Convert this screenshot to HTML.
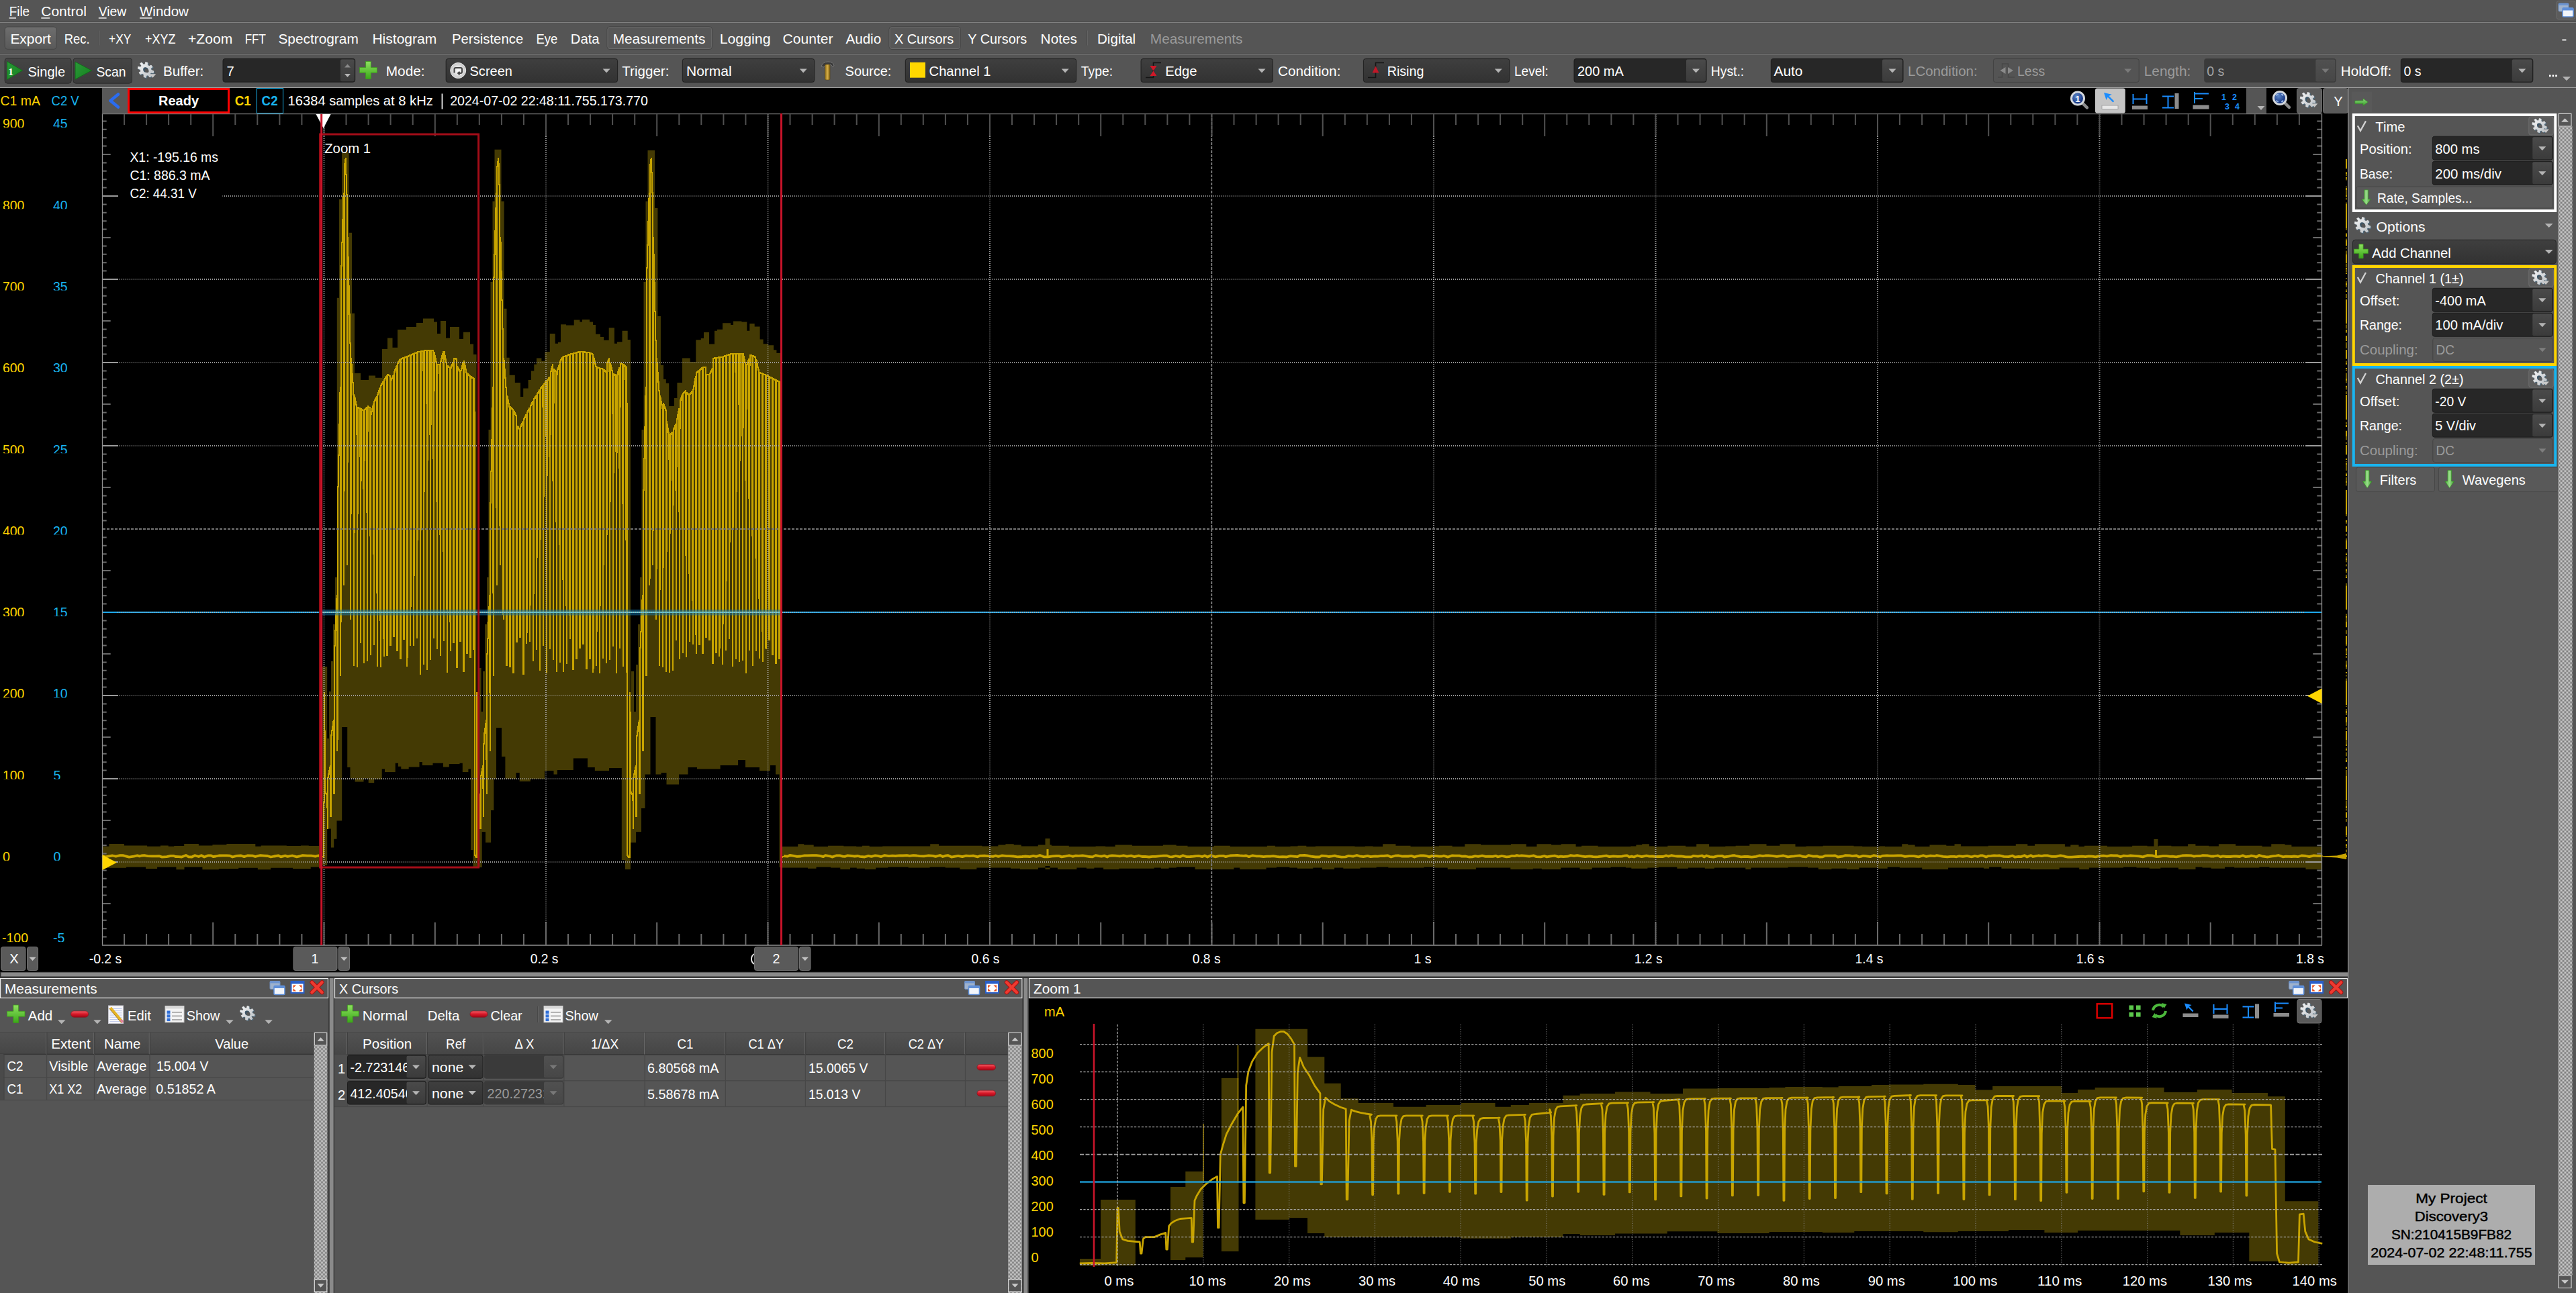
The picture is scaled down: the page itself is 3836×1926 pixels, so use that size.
<!DOCTYPE html>
<html><head><meta charset="utf-8"><title>WaveForms Scope</title>
<style>html,body{margin:0;padding:0;background:#555;}svg{display:block}text{font-family:"Liberation Sans",sans-serif;white-space:pre}</style>
</head><body>
<svg width="3836" height="1926" viewBox="0 0 3836 1926" fill="none">
<defs>
<linearGradient id="gg" x1="0" y1="0" x2="1" y2="1"><stop offset="0" stop-color="#fbfbfb"/><stop offset="1" stop-color="#b4b9be"/></linearGradient>
<linearGradient id="pg" x1="0" y1="0" x2="0" y2="1"><stop offset="0" stop-color="#8ee060"/><stop offset="1" stop-color="#3aa818"/></linearGradient>
<linearGradient id="mg" x1="0" y1="0" x2="0" y2="1"><stop offset="0" stop-color="#f06068"/><stop offset="0.5" stop-color="#d81828"/><stop offset="1" stop-color="#a00818"/></linearGradient>
<linearGradient id="ag" x1="0" y1="0" x2="1" y2="0"><stop offset="0" stop-color="#4ab43a"/><stop offset="0.5" stop-color="#9adc8a"/><stop offset="1" stop-color="#3aa02c"/></linearGradient>
<linearGradient id="ag2" x1="0" y1="0" x2="0" y2="1"><stop offset="0" stop-color="#8ad87a"/><stop offset="1" stop-color="#3aa02c"/></linearGradient>
<linearGradient id="cba" x1="0" y1="0" x2="0" y2="1"><stop offset="0" stop-color="#4a4a4a"/><stop offset="1" stop-color="#3b3b3b"/></linearGradient>
<linearGradient id="cbd" x1="0" y1="0" x2="0" y2="1"><stop offset="0" stop-color="#505050"/><stop offset="1" stop-color="#474747"/></linearGradient>
<linearGradient id="cbl" x1="0" y1="0" x2="0" y2="1"><stop offset="0" stop-color="#3f3f3f"/><stop offset="1" stop-color="#323232"/></linearGradient>
<linearGradient id="btn" x1="0" y1="0" x2="0" y2="1"><stop offset="0" stop-color="#454545"/><stop offset="1" stop-color="#3b3b3b"/></linearGradient>
<linearGradient id="exp" x1="0" y1="0" x2="0" y2="1"><stop offset="0" stop-color="#6e6e6e"/><stop offset="1" stop-color="#595959"/></linearGradient>
<linearGradient id="play" x1="0" y1="0" x2="1" y2="1"><stop offset="0" stop-color="#2a9a38"/><stop offset="1" stop-color="#15801f"/></linearGradient>
<linearGradient id="ham" x1="0" y1="0" x2="1" y2="0"><stop offset="0" stop-color="#8a6a18"/><stop offset="0.5" stop-color="#d8b048"/><stop offset="1" stop-color="#7a5c14"/></linearGradient>
<linearGradient id="hdr" x1="0" y1="0" x2="0" y2="1"><stop offset="0" stop-color="#525252"/><stop offset="1" stop-color="#464646"/></linearGradient>
<radialGradient id="scr"><stop offset="0" stop-color="#ffffff"/><stop offset="1" stop-color="#c8c8c8"/></radialGradient>
<radialGradient id="mgf" cx="0.4" cy="0.35"><stop offset="0" stop-color="#5a86c8"/><stop offset="1" stop-color="#1c3c88"/></radialGradient>
<pattern id="chk" width="2" height="2" patternUnits="userSpaceOnUse"><rect width="2" height="2" fill="#767676"/><rect width="1" height="1" fill="#d0d0d0"/><rect x="1" y="1" width="1" height="1" fill="#d0d0d0"/></pattern>
</defs>
<rect x="0" y="131" width="3497" height="1317.5" fill="#000"/>
<rect x="152" y="131" width="38" height="38.5" fill="#585858"/>
<path d="M176 140.5L164.5 150 176 159.5" fill="none" stroke="#2a6cf0" stroke-width="4.6" stroke-linecap="round" stroke-linejoin="round"/>
<rect x="191.5" y="132.5" width="149" height="35" fill="#000" stroke="#ff0000" stroke-width="3"/>
<text x="236" y="157" font-size="20.2" fill="#fff" font-weight="700" textLength="60" lengthAdjust="spacingAndGlyphs">Ready</text>
<text x="0.5" y="157" font-size="20.2" fill="#ffd500" textLength="59.4" lengthAdjust="spacingAndGlyphs">C1 mA</text>
<text x="76.5" y="157" font-size="20.2" fill="#19b5f0" textLength="41.2" lengthAdjust="spacingAndGlyphs">C2 V</text>
<text x="349.8" y="157" font-size="20.2" fill="#ffd500" font-weight="700" textLength="24" lengthAdjust="spacingAndGlyphs">C1</text>
<rect x="382.5" y="131.5" width="39" height="37" fill="#000" stroke="#19b5f0" stroke-width="1"/>
<text x="389.6" y="157" font-size="20.2" fill="#19b5f0" font-weight="700" textLength="24" lengthAdjust="spacingAndGlyphs">C2</text>
<text x="428.6" y="157" font-size="20.2" fill="#fff" textLength="216.2" lengthAdjust="spacingAndGlyphs">16384 samples at 8 kHz</text>
<rect x="657.6" y="139.5" width="1.6" height="23" fill="#fff"/>
<text x="670.2" y="157" font-size="20.2" fill="#fff" textLength="294.6" lengthAdjust="spacingAndGlyphs">2024-07-02 22:48:11.755.173.770</text>
<path d="M3099.9 152.4l8 8" stroke="#8c8c8c" stroke-width="4.5" stroke-linecap="round"/>
<circle cx="3094" cy="146.5" r="9.5" fill="url(#mgf)" stroke="#d4d8dc" stroke-width="3"/>
<text x="3090.3" y="152" font-size="13.4" fill="#fff" font-weight="700">1</text>
<rect x="3120" y="131.5" width="44.8" height="37" fill="#c4c4c4" rx="3"/>
<path d="M3133 138l3.5 11 2.2-4.2 7.8 7.8 1.8-1.8-7.8-7.8 4.2-2.2z" fill="#1a8cff"/>
<rect x="3130" y="157" width="24" height="5.5" fill="#e8e8e8" stroke="#9a9a9a" stroke-width="0.8"/>
<path d="M3176.5 140v15M3196.5 140v15M3176.5 147.5h20" fill="none" stroke="#1a8cff" stroke-width="2"/>
<rect x="3175" y="157.5" width="23" height="5.5" fill="#8c8c8c"/>
<path d="M3220 143.5h17M3220 160.5h17M3228.5 143.5v17" fill="none" stroke="#1a8cff" stroke-width="2"/>
<rect x="3238.5" y="139" width="6" height="23" fill="#8c8c8c"/>
<path d="M3268 137v17M3268 139.5h21M3268 147h12" fill="none" stroke="#1a8cff" stroke-width="2"/>
<rect x="3265.5" y="156.5" width="24" height="6" fill="#8c8c8c"/>
<text x="3308" y="149" font-size="12.5" fill="#1a8cff" font-weight="700">1</text>
<text x="3324" y="149" font-size="12.5" fill="#1a8cff" font-weight="700">2</text>
<text x="3313" y="163" font-size="12.5" fill="#1a8cff" font-weight="700">3</text>
<text x="3328" y="163" font-size="12.5" fill="#1a8cff" font-weight="700">4</text>
<rect x="3345" y="131" width="30" height="38.5" fill="#555"/>
<path d="M3361.5 158h11l-5.5 6z" fill="#b4b4b4"/>
<path d="M3400.9 151.9l8 8" stroke="#8c8c8c" stroke-width="4.5" stroke-linecap="round"/>
<circle cx="3395" cy="146" r="9.5" fill="url(#mgf)" stroke="#d4d8dc" stroke-width="3"/>
<path d="M3390.5 143v-2.5h2.5M3397 140.5h2.5v2.5M3399.5 149v2.5h-2.5M3393 151.5h-2.5v-2.5" fill="none" stroke="#9ab8e8" stroke-width="1.3"/>
<rect x="3420.5" y="131.5" width="37" height="37" fill="#5a5a5a" stroke="#6e6e6e" stroke-width="1" rx="3"/>
<g transform="translate(3436.5 148.5) rotate(-45) scale(0.84 1) rotate(45)"><path d="M8.5 -0.3L12.1 0.7L11.4 4L7.7 3.5L6.2 5.8L8 9.1L5.2 10.9L2.9 7.9L0.3 8.5L-0.7 12.1L-4 11.4L-3.5 7.7L-5.8 6.2L-9.1 8L-10.9 5.2L-7.9 2.9L-8.5 0.3L-12.1 -0.7L-11.4 -4L-7.7 -3.5L-6.2 -5.8L-8 -9.1L-5.2 -10.9L-2.9 -7.9L-0.3 -8.5L0.7 -12.1L4 -11.4L3.5 -7.7L5.8 -6.2L9.1 -8L10.9 -5.2L7.9 -2.9z" transform="translate(1.3 1.1)" fill="#4f6676" stroke="#4f6676" stroke-width="1" stroke-linejoin="round"/><path d="M8.5 -0.3L12.1 0.7L11.4 4L7.7 3.5L6.2 5.8L8 9.1L5.2 10.9L2.9 7.9L0.3 8.5L-0.7 12.1L-4 11.4L-3.5 7.7L-5.8 6.2L-9.1 8L-10.9 5.2L-7.9 2.9L-8.5 0.3L-12.1 -0.7L-11.4 -4L-7.7 -3.5L-6.2 -5.8L-8 -9.1L-5.2 -10.9L-2.9 -7.9L-0.3 -8.5L0.7 -12.1L4 -11.4L3.5 -7.7L5.8 -6.2L9.1 -8L10.9 -5.2L7.9 -2.9zM-4 0a4 4 0 1 0 7.9 0a4 4 0 1 0 -7.9 0z" fill="url(#gg)" fill-rule="evenodd" stroke="#dfe3e6" stroke-width="0.8" stroke-linejoin="round"/><path d="M-4 0a4 4 0 1 0 7.9 0a4 4 0 1 0 -7.9 0z" fill="#3d5566"/><path d="M-4 0a4 4 0 1 0 7.9 0a4 4 0 1 0 -7.9 0z" transform="translate(1.5 1.2) scale(0.8)" fill="#5a5a5a"/></g>
<path d="M3441.9 154.3h9.5l-4.8 5.5z" fill="#c8c8c8"/>
<rect x="3459.5" y="131.5" width="36.8" height="37" fill="#5a5a5a" stroke="#6e6e6e" stroke-width="1" rx="3"/>
<text x="3475.2" y="157.5" font-size="20.2" fill="#fff">Y</text>
<path d="M152 1260.7L162.4 1260.7L162.4 1257L184.9 1257L184.9 1259.5L197.5 1259.5L197.5 1259.5L219.1 1259.5L219.1 1260.7L238.9 1260.7L238.9 1259.5L250.7 1259.5L250.7 1260.7L259.2 1260.7L259.2 1260.1L274.2 1260.1L274.2 1257L295.9 1257L295.9 1259.5L316.4 1259.5L316.4 1258.3L337.4 1258.3L337.4 1257L356.1 1257L356.1 1257L380.3 1257L380.3 1260.7L388.7 1260.7L388.7 1259.5L406.4 1259.5L406.4 1259.5L426.8 1259.5L426.8 1260.1L447.9 1260.1L447.9 1259.5L459.8 1259.5L459.8 1260.1L480 1260.1L480 1295.2L479.3 1295.2L479.3 1291.6L462.7 1291.6L462.7 1294L436.1 1294L436.1 1292.8L415.1 1292.8L415.1 1292.8L403 1292.8L403 1295.2L383.8 1295.2L383.8 1292.8L355.2 1292.8L355.2 1294L325.8 1294L325.8 1295.2L301.4 1295.2L301.4 1291.6L274.5 1291.6L274.5 1295.2L262.4 1295.2L262.4 1291.6L234.1 1291.6L234.1 1294L217 1294L217 1291.6L188 1291.6L188 1292.8L165.1 1292.8L165.1 1292.8L152 1292.8zM1163 1261L1188.2 1261L1188.2 1257.3L1197.2 1257.3L1197.2 1258.6L1211.7 1258.6L1211.7 1261L1233 1261L1233 1259.8L1256.3 1259.8L1256.3 1260.4L1275.2 1260.4L1275.2 1261L1283.9 1261L1283.9 1259.8L1294.7 1259.8L1294.7 1261L1314.2 1261L1314.2 1260.4L1335.2 1260.4L1335.2 1260.4L1360.3 1260.4L1360.3 1260.4L1385.2 1260.4L1385.2 1257.3L1398 1257.3L1398 1259.8L1421.7 1259.8L1421.7 1259.8L1438.1 1259.8L1438.1 1259.8L1462.4 1259.8L1462.4 1260.4L1486.4 1260.4L1486.4 1258.6L1497.4 1258.6L1497.4 1257.3L1509.7 1257.3L1509.7 1258.6L1520.8 1258.6L1520.8 1260.4L1531.3 1260.4L1531.3 1260.4L1545.8 1260.4L1545.8 1258.6L1565.9 1258.6L1565.9 1259.8L1591.8 1259.8L1591.8 1261L1614.2 1261L1614.2 1261L1631.6 1261L1631.6 1260.4L1646.2 1260.4L1646.2 1261L1660.6 1261L1660.6 1258.6L1685.9 1258.6L1685.9 1259.8L1711.1 1259.8L1711.1 1259.8L1731.9 1259.8L1731.9 1258.6L1751.7 1258.6L1751.7 1259.8L1768.5 1259.8L1768.5 1261L1785.6 1261L1785.6 1261L1807.9 1261L1807.9 1259.8L1831.8 1259.8L1831.8 1261L1846.1 1261L1846.1 1261L1870.7 1261L1870.7 1261L1886.9 1261L1886.9 1259.8L1898.9 1259.8L1898.9 1261L1921.5 1261L1921.5 1260.4L1932.5 1260.4L1932.5 1259.8L1945.3 1259.8L1945.3 1261L1958.9 1261L1958.9 1260.4L1979.6 1260.4L1979.6 1260.4L1997.7 1260.4L1997.7 1260.4L2017.5 1260.4L2017.5 1261L2032.8 1261L2032.8 1260.4L2044.5 1260.4L2044.5 1261L2059.1 1261L2059.1 1257.3L2078.4 1257.3L2078.4 1259.8L2100.5 1259.8L2100.5 1261L2121.5 1261L2121.5 1261L2133 1261L2133 1260.4L2142.9 1260.4L2142.9 1259.8L2162.6 1259.8L2162.6 1261L2181.3 1261L2181.3 1257.3L2205.1 1257.3L2205.1 1258.6L2226.6 1258.6L2226.6 1258.6L2250 1258.6L2250 1257.3L2272.8 1257.3L2272.8 1261L2288.5 1261L2288.5 1257.3L2310.1 1257.3L2310.1 1258.6L2324.7 1258.6L2324.7 1257.3L2337.1 1257.3L2337.1 1257.3L2346.6 1257.3L2346.6 1261L2355.1 1261L2355.1 1259.8L2379.6 1259.8L2379.6 1261L2392.2 1261L2392.2 1261L2417.1 1261L2417.1 1261L2428.4 1261L2428.4 1260.4L2436.4 1260.4L2436.4 1258.6L2445.2 1258.6L2445.2 1257.3L2455.9 1257.3L2455.9 1260.4L2464 1260.4L2464 1261L2483.3 1261L2483.3 1259.8L2493.3 1259.8L2493.3 1259.8L2510.1 1259.8L2510.1 1261L2526.2 1261L2526.2 1257.3L2545.1 1257.3L2545.1 1261L2569.3 1261L2569.3 1260.4L2584.6 1260.4L2584.6 1259.8L2605.3 1259.8L2605.3 1257.3L2630.5 1257.3L2630.5 1259.8L2650.4 1259.8L2650.4 1257.3L2673.5 1257.3L2673.5 1261L2689.6 1261L2689.6 1260.4L2714.6 1260.4L2714.6 1259.8L2733.2 1259.8L2733.2 1259.8L2749.9 1259.8L2749.9 1259.8L2760.5 1259.8L2760.5 1260.4L2773.2 1260.4L2773.2 1261L2798.7 1261L2798.7 1260.4L2807 1260.4L2807 1261L2832.2 1261L2832.2 1257.3L2841.3 1257.3L2841.3 1258.6L2851.6 1258.6L2851.6 1261L2861.4 1261L2861.4 1261L2873.5 1261L2873.5 1258.6L2898.3 1258.6L2898.3 1259.8L2910.5 1259.8L2910.5 1257.3L2919.9 1257.3L2919.9 1260.4L2938.5 1260.4L2938.5 1260.4L2960.7 1260.4L2960.7 1259.8L2981.5 1259.8L2981.5 1259.8L3001.8 1259.8L3001.8 1257.3L3019.3 1257.3L3019.3 1259.8L3030 1259.8L3030 1257.3L3045.4 1257.3L3045.4 1257.3L3062.6 1257.3L3062.6 1257.3L3074.9 1257.3L3074.9 1261L3083.3 1261L3083.3 1258.6L3095.5 1258.6L3095.5 1261L3103.9 1261L3103.9 1259.8L3120.3 1259.8L3120.3 1259.8L3137.9 1259.8L3137.9 1261L3149.7 1261L3149.7 1261L3175.1 1261L3175.1 1259.8L3197.6 1259.8L3197.6 1260.4L3214.8 1260.4L3214.8 1259.8L3233.4 1259.8L3233.4 1260.4L3258.1 1260.4L3258.1 1257.3L3269.4 1257.3L3269.4 1259.8L3289.3 1259.8L3289.3 1260.4L3303.9 1260.4L3303.9 1257.3L3329.2 1257.3L3329.2 1259.8L3348.2 1259.8L3348.2 1259.8L3368.6 1259.8L3368.6 1261L3382.2 1261L3382.2 1257.3L3402.5 1257.3L3402.5 1258.6L3412.4 1258.6L3412.4 1261L3435.5 1261L3435.5 1261L3457 1261L3457 1295L3433.5 1295L3433.5 1292.6L3406.4 1292.6L3406.4 1292.6L3394.7 1292.6L3394.7 1292.6L3379.4 1292.6L3379.4 1291.4L3364.4 1291.4L3364.4 1292.6L3337.5 1292.6L3337.5 1292.6L3327.1 1292.6L3327.1 1291.4L3313 1291.4L3313 1293.8L3292.6 1293.8L3292.6 1292.6L3279.5 1292.6L3279.5 1291.4L3269.5 1291.4L3269.5 1295L3244 1295L3244 1292.6L3217.3 1292.6L3217.3 1293.8L3200.7 1293.8L3200.7 1292.6L3181.5 1292.6L3181.5 1291.4L3162.1 1291.4L3162.1 1292.6L3139.7 1292.6L3139.7 1292.6L3110.9 1292.6L3110.9 1295L3096.2 1295L3096.2 1292.6L3086.5 1292.6L3086.5 1292.6L3066.7 1292.6L3066.7 1295L3055.7 1295L3055.7 1295L3040.9 1295L3040.9 1295L3023.2 1295L3023.2 1293.8L2996.5 1293.8L2996.5 1293.8L2980.4 1293.8L2980.4 1291.4L2962.1 1291.4L2962.1 1293.8L2953.9 1293.8L2953.9 1292.6L2931.1 1292.6L2931.1 1292.6L2912.1 1292.6L2912.1 1292.6L2901.1 1292.6L2901.1 1295L2875.8 1295L2875.8 1295L2862.2 1295L2862.2 1292.6L2850.3 1292.6L2850.3 1292.6L2828.8 1292.6L2828.8 1291.4L2810.7 1291.4L2810.7 1293.8L2796.8 1293.8L2796.8 1292.6L2768.5 1292.6L2768.5 1295L2749.9 1295L2749.9 1293.8L2727.4 1293.8L2727.4 1295L2707.7 1295L2707.7 1292.6L2692 1292.6L2692 1291.4L2662.6 1291.4L2662.6 1292.6L2644.3 1292.6L2644.3 1292.6L2625 1292.6L2625 1292.6L2607.4 1292.6L2607.4 1295L2599.3 1295L2599.3 1292.6L2573.6 1292.6L2573.6 1292.6L2552.8 1292.6L2552.8 1293.8L2538.8 1293.8L2538.8 1292.6L2513.9 1292.6L2513.9 1293.8L2497.3 1293.8L2497.3 1291.4L2469.8 1291.4L2469.8 1292.6L2453.4 1292.6L2453.4 1293.8L2429.3 1293.8L2429.3 1292.6L2420.9 1292.6L2420.9 1291.4L2398.6 1291.4L2398.6 1292.6L2370.7 1292.6L2370.7 1295L2352.5 1295L2352.5 1292.6L2324.3 1292.6L2324.3 1295L2307.9 1295L2307.9 1295L2295.8 1295L2295.8 1293.8L2282.8 1293.8L2282.8 1295L2273 1295L2273 1295L2249.3 1295L2249.3 1292.6L2220.2 1292.6L2220.2 1292.6L2197.9 1292.6L2197.9 1295L2169.3 1295L2169.3 1295L2155.7 1295L2155.7 1292.6L2137.1 1292.6L2137.1 1291.4L2120.5 1291.4L2120.5 1292.6L2093.1 1292.6L2093.1 1292.6L2067.3 1292.6L2067.3 1291.4L2049.6 1291.4L2049.6 1292.6L2025.5 1292.6L2025.5 1293.8L2000.3 1293.8L2000.3 1292.6L1987.1 1292.6L1987.1 1295L1969 1295L1969 1292.6L1955.3 1292.6L1955.3 1293.8L1941.9 1293.8L1941.9 1293.8L1931.8 1293.8L1931.8 1292.6L1920.3 1292.6L1920.3 1291.4L1900.8 1291.4L1900.8 1292.6L1885.6 1292.6L1885.6 1295L1862.8 1295L1862.8 1295L1846.2 1295L1846.2 1292.6L1837.4 1292.6L1837.4 1295L1807.6 1295L1807.6 1295L1779.6 1295L1779.6 1291.4L1751.8 1291.4L1751.8 1292.6L1740.6 1292.6L1740.6 1293.8L1728.7 1293.8L1728.7 1292.6L1718.6 1292.6L1718.6 1293.8L1694.6 1293.8L1694.6 1293.8L1666.4 1293.8L1666.4 1295L1643.1 1295L1643.1 1292.6L1629.4 1292.6L1629.4 1293.8L1617.9 1293.8L1617.9 1292.6L1603.4 1292.6L1603.4 1295L1574.9 1295L1574.9 1292.6L1545.9 1292.6L1545.9 1295L1518.9 1295L1518.9 1293.8L1504.9 1293.8L1504.9 1292.6L1493.8 1292.6L1493.8 1292.6L1478 1292.6L1478 1292.6L1454.4 1292.6L1454.4 1295L1429.3 1295L1429.3 1292.6L1407.7 1292.6L1407.7 1291.4L1384.5 1291.4L1384.5 1292.6L1362.4 1292.6L1362.4 1292.6L1352.6 1292.6L1352.6 1291.4L1339 1291.4L1339 1291.4L1322.3 1291.4L1322.3 1292.6L1304.1 1292.6L1304.1 1295L1287.9 1295L1287.9 1293.8L1275.7 1293.8L1275.7 1292.6L1266 1292.6L1266 1295L1251.3 1295L1251.3 1292.6L1237 1292.6L1237 1291.4L1215.5 1291.4L1215.5 1293.8L1203 1293.8L1203 1292.6L1180.9 1292.6L1180.9 1292.6L1163 1292.6zM1556.5 1262V1249h7v13zM3207.5 1262V1250h6v12zM1556.5 1290v5h7v-5zM480 993L487.2 993L487.2 1100L490 1100L490 1030L493 1030L493 985L496 985L496 930L499 930L499 860L501.8 860L501.8 443.7L505 443.7L505 297L509 297L509 226.8L519.6 226.8L519.6 346.7L524 346.7L524 466.7L528 466.7L528 556L537 556L537 566L549 566L549 559.6L559 559.6L559 562.7L569 562.7L569 520L577 520L577 503.5L584.5 503.5L584.5 517.7L592 517.7L592 491L605 491L605 487L620 487L620 481L630 481L630 474.4L646 474.4L646 479.5L651 479.5L651 497L656 497L656 478L664 478L664 503.5L670 503.5L670 487L684 487L684 505L690 505L690 494.8L700 494.8L700 512.6L705 512.6L705 528L709.5 528L709.5 1292L704.5 1292L704.5 1266L701 1266L701 1145.4L697.4 1145.4L697.4 1150L688.8 1150L688.8 1136.8L684.5 1136.8L684.5 1138L668.8 1138L668.8 1142.5L660 1142.5L660 1136.8L644.5 1136.8L644.5 1140L628.8 1140L628.8 1135L624.5 1135L624.5 1142.5L608.7 1142.5L608.7 1145.4L597.3 1145.4L597.3 1141.7L593 1141.7L593 1136.8L588.7 1136.8L588.7 1150L573 1150L573 1145.4L568.7 1145.4L568.7 1161L557.2 1161L557.2 1166L548.7 1166L548.7 1159.7L541.5 1159.7L541.5 1164.5L528.6 1164.5L528.6 1159.7L521.5 1159.7L521.5 1143L517.2 1143L517.2 1083L509.2 1083L509.2 1222.6L501.5 1222.6L501.5 1249.8L497.2 1249.8L497.2 1262.6L492.9 1262.6L492.9 1234.6L487.2 1234.6L487.2 1289L480 1289zM712.5 995L716.6 995L716.6 1060L719 1060L719 1000L722 1000L722 930L725 930L725 860L727.5 860L727.5 640L730.5 640L730.5 420L733.5 420L733.5 300L736.5 300L736.5 222.8L746.5 222.8L746.5 300L750.7 300L750.7 459.8L754.5 459.8L754.5 532.8L758.7 532.8L758.7 558.8L766.8 558.8L766.8 570L775 570L775 591L779.2 591L779.2 578.6L786.6 578.6L786.6 566L791 566L791 552.6L795.3 552.6L795.3 542.7L799 542.7L799 533.6L806.4 533.6L806.4 537.8L811.4 537.8L811.4 524L818.8 524L818.8 497L826.7 497L826.7 511.8L831 511.8L831 509.8L835 509.8L835 483.3L843 483.3L843 484.6L854.7 484.6L854.7 476.4L863.4 476.4L863.4 479.6L867 479.6L867 475.9L878 475.9L878 479.6L883 479.6L883 484L887 484L887 497.7L894 497.7L894 501.9L899 501.9L899 506.8L906.7 506.8L906.7 488.3L914.9 488.3L914.9 511.8L919 511.8L919 509.3L926.5 509.3L926.5 492.7L934.7 492.7L934.7 506L938.9 506L938.9 1295L931 1295L931 1281L925.8 1281L925.8 1144L907 1144L907 1148L885.8 1148L885.8 1142.9L875 1142.9L875 1129.5L853.8 1129.5L853.8 1147L829.8 1147L829.8 1153.5L824.5 1153.5L824.5 1148L811 1148L811 1160L789.8 1160L789.8 1164L773.7 1164L773.7 1151L768.4 1151L768.4 1160L752.4 1160L752.4 1127L747 1127L747 1084L739 1084L739 1160L735.3 1160L735.3 1207L731 1207L731 1255L723 1255L723 1239L717.7 1239L717.7 1292L709.5 1292zM940 1000L944 1000L944 1060L947 1060L947 990L950 990L950 930L953 930L953 860L955.5 860L955.5 640L958.5 640L958.5 420L961.5 420L961.5 300L964.5 300L964.5 224L975 224L975 310L979.4 310L979.4 471L983.9 471L983.9 544L988 544L988 565L991.8 565L991.8 571L996.2 571L996.2 605L1004 605L1004 593L1008.4 593L1008.4 570L1016 570L1016 533.6L1027.7 533.6L1027.7 539L1036.3 539L1036.3 506.3L1043.8 506.3L1043.8 503.9L1048 503.9L1048 495L1056 495L1056 512.5L1064 512.5L1064 492.7L1068 492.7L1068 490.7L1076 490.7L1076 481.3L1088 481.3L1088 484L1092 484L1092 478.4L1104.4 478.4L1104.4 479.6L1112.3 479.6L1112.3 492.7L1116.3 492.7L1116.3 482L1123.7 482L1123.7 486.5L1131.6 486.5L1131.6 505.6L1136.6 505.6L1136.6 512.3L1144 512.3L1144 514.3L1152 514.3L1152 521.2L1156.4 521.2L1156.4 525.9L1163 525.9L1163 1292L1160.6 1292L1160.6 1153.5L1155 1153.5L1155 1140L1147 1140L1147 1148L1131 1148L1131 1143L1110 1143L1110 1132L1099 1132L1099 1140L1072.6 1140L1072.6 1145.5L1038 1145.5L1038 1143L1024.5 1143L1024.5 1153.5L1011 1153.5L1011 1168.5L992.5 1168.5L992.5 1151L984.5 1151L984.5 1153.5L976.5 1153.5L976.5 1068L968.5 1068L968.5 1153.5L960.5 1153.5L960.5 1204L955 1204L955 1239L947 1239L947 1255L938.9 1255z" fill="#443a04"/>
<path d="M477.5 1275V1277M478.5 1275V1277M479.5 1275V1277M480.5 1275V1277M481.5 1194V1278M482.5 1031V1278M483.5 1031V1196M484.5 1088V1183M485.5 1179V1184M486.5 1181V1204M487.5 1157V1235M488.5 1152V1235M489.5 1147V1159M490.5 1142V1154M491.5 1140V1217M492.5 1094V1217M493.5 1087V1217M494.5 1081V1096M495.5 1074V1089M496.5 1072V1183M497.5 961V1183M498.5 938V1183M499.5 914V963M500.5 891V940M501.5 886V1119M502.5 724V1119M503.5 677V1102M504.5 631V726M505.5 584V679M506.5 576V1007M507.5 395V1007M508.5 360V927M509.5 326V397M510.5 292V362M511.5 287V872M512.5 243V872M513.5 237V732M514.5 235V261M515.5 235V291M516.5 259V842M517.5 289V842M518.5 353V689M519.5 382V469M520.5 425V512M521.5 467V923M522.5 510V923M523.5 533V766M524.5 542V571M525.5 556V589M526.5 569V992M527.5 587V992M528.5 589V794M529.5 592V604M530.5 597V648M531.5 602V994M532.5 606V994M533.5 606V766M534.5 606V609M535.5 607V681M536.5 607V958M537.5 608V958M538.5 608V717M539.5 609V612M540.5 610V729M541.5 610V988M542.5 609V988M543.5 608V687M544.5 607V611M545.5 606V764M546.5 606V985M547.5 604V985M548.5 604V643M549.5 605V608M550.5 606V799M551.5 606V976M552.5 612V976M553.5 608V618M554.5 604V614M555.5 601V826M556.5 597V961M557.5 595V961M558.5 593V599M559.5 591V597M560.5 590V884M561.5 587V993M562.5 584V993M563.5 581V589M564.5 578V586M565.5 577V925M566.5 573V994M567.5 571V994M568.5 570V575M569.5 568V573M570.5 567V952M571.5 565V978M572.5 563V978M573.5 561V567M574.5 560V565M575.5 559V977M576.5 557V977M577.5 557V977M578.5 557V560M579.5 558V561M580.5 558V962M581.5 559V962M582.5 563V962M583.5 561V567M584.5 559V565M585.5 558V949M586.5 553V949M587.5 550V949M588.5 548V555M589.5 545V552M590.5 544V970M591.5 540V970M592.5 538V970M593.5 537V542M594.5 535V540M595.5 534V982M596.5 534V982M597.5 533V982M598.5 533V536M599.5 532V535M600.5 532V953M601.5 532V953M602.5 531V953M603.5 531V534M604.5 530V533M605.5 530V993M606.5 530V993M607.5 529V980M608.5 529V532M609.5 528V531M610.5 528V962M611.5 528V962M612.5 527V904M613.5 527V530M614.5 526V529M615.5 526V962M616.5 525V962M617.5 525V858M618.5 525V527M619.5 524V527M620.5 524V951M621.5 523V951M622.5 523V805M623.5 523V525M624.5 523V525M625.5 523V1005M626.5 522V1005M627.5 522V790M628.5 522V524M629.5 522V553M630.5 522V990M631.5 521V990M632.5 521V733M633.5 521V523M634.5 521V602M635.5 521V998M636.5 521V998M637.5 521V686M638.5 521V523M639.5 521V648M640.5 521V983M641.5 521V983M642.5 521V633M643.5 521V523M644.5 521V684M645.5 521V951M646.5 524V951M647.5 524V583M648.5 529V540M649.5 533V748M650.5 538V967M651.5 542V967M652.5 542V557M653.5 542V544M654.5 542V797M655.5 537V977M656.5 533V977M657.5 529V539M658.5 526V535M659.5 523V822M660.5 523V955M661.5 523V955M662.5 523V536M663.5 529V541M664.5 534V908M665.5 539V1002M666.5 544V1002M667.5 544V548M668.5 545V548M669.5 546V927M670.5 546V970M671.5 544V970M672.5 542V549M673.5 540V546M674.5 539V958M675.5 533V958M676.5 533V958M677.5 533V535M678.5 533V536M679.5 533V995M680.5 534V995M681.5 545V995M682.5 546V552M683.5 548V554M684.5 550V956M685.5 551V956M686.5 548V956M687.5 544V553M688.5 541V550M689.5 539V1001M690.5 537V1001M691.5 537V1001M692.5 539V551M693.5 544V556M694.5 549V974M695.5 554V974M696.5 556V974M697.5 556V560M698.5 557V561M699.5 558V980M700.5 559V980M701.5 560V980M702.5 560V564M703.5 561V564M704.5 562V968M705.5 562V968M706.5 563V1275M707.5 613V1277M708.5 1273V1278M709.5 1031V1278M710.5 1031V1278M711.5 1031V1182M712.5 1178V1184M713.5 1180V1185M714.5 1182V1235M715.5 1154V1235M716.5 1149V1235M717.5 1144V1156M718.5 1140V1175M719.5 1107V1217M720.5 1091V1217M721.5 1084V1109M722.5 1077V1093M723.5 1072V1132M724.5 973V1183M725.5 950V1183M726.5 926V975M727.5 903V952M728.5 886V1032M729.5 748V1119M730.5 701V1119M731.5 654V750M732.5 607V703M733.5 576V884M734.5 412V1007M735.5 378V1007M736.5 343V414M737.5 309V380M738.5 287V757M739.5 247V872M740.5 240V872M741.5 235V249M742.5 235V276M743.5 243V784M744.5 274V842M745.5 353V842M746.5 360V448M747.5 403V491M748.5 446V916M749.5 489V923M750.5 533V923M751.5 536V564M752.5 549V578M753.5 562V992M754.5 576V992M755.5 589V992M756.5 590V602M757.5 595V607M758.5 600V994M759.5 605V994M760.5 605V994M761.5 606V610M762.5 607V611M763.5 608V1003M764.5 609V1003M765.5 611V1003M766.5 612V618M767.5 614V620M768.5 616V957M769.5 618V957M770.5 634V957M771.5 634V639M772.5 635V640M773.5 637V950M774.5 634V950M775.5 632V950M776.5 630V636M777.5 628V634M778.5 627V1005M779.5 623V1005M780.5 621V1005M781.5 619V625M782.5 617V623M783.5 617V959M784.5 613V959M785.5 611V943M786.5 609V615M787.5 607V613M788.5 607V956M789.5 603V956M790.5 601V902M791.5 599V605M792.5 597V603M793.5 597V985M794.5 593V985M795.5 592V885M796.5 590V595M797.5 589V594M798.5 588V968M799.5 585V968M800.5 584V831M801.5 582V587M802.5 580V586M803.5 580V999M804.5 577V999M805.5 576V804M806.5 575V579M807.5 573V607M808.5 573V962M809.5 571V962M810.5 570V740M811.5 568V573M812.5 567V650M813.5 567V1003M814.5 565V1003M815.5 564V709M816.5 562V567M817.5 561V681M818.5 561V967M819.5 552V967M820.5 548V648M821.5 545V554M822.5 542V717M823.5 542V983M824.5 549V983M825.5 549V601M826.5 550V554M827.5 551V778M828.5 552V1001M829.5 549V1001M830.5 547V559M831.5 544V551M832.5 542V812M833.5 537V987M834.5 535V987M835.5 533V539M836.5 532V537M837.5 531V864M838.5 530V1001M839.5 530V1001M840.5 530V532M841.5 529V532M842.5 529V903M843.5 529V989M844.5 528V989M845.5 528V531M846.5 527V530M847.5 527V917M848.5 527V952M849.5 526V952M850.5 526V529M851.5 526V528M852.5 526V998M853.5 525V998M854.5 525V998M855.5 525V527M856.5 525V527M857.5 524V982M858.5 524V982M859.5 524V982M860.5 523V526M861.5 523V526M862.5 523V966M863.5 523V966M864.5 523V966M865.5 523V525M866.5 523V525M867.5 523V960M868.5 523V960M869.5 523V960M870.5 523V526M871.5 523V526M872.5 524V997M873.5 524V997M874.5 524V997M875.5 524V526M876.5 524V526M877.5 524V982M878.5 524V982M879.5 525V982M880.5 525V528M881.5 526V529M882.5 526V1002M883.5 527V1002M884.5 531V996M885.5 533V543M886.5 537V547M887.5 541V992M888.5 545V992M889.5 546V941M890.5 546V549M891.5 547V549M892.5 547V1003M893.5 547V1003M894.5 548V903M895.5 548V550M896.5 548V551M897.5 548V981M898.5 549V981M899.5 550V842M900.5 550V554M901.5 551V555M902.5 552V988M903.5 539V988M904.5 537V797M905.5 535V541M906.5 533V554M907.5 533V983M908.5 540V983M909.5 540V748M910.5 543V553M911.5 547V617M912.5 551V963M913.5 556V963M914.5 556V705M915.5 557V560M916.5 557V673M917.5 558V1003M918.5 557V1003M919.5 553V675M920.5 550V559M921.5 547V698M922.5 547V966M923.5 540V966M924.5 540V607M925.5 541V543M926.5 541V751M927.5 541V993M928.5 542V993M929.5 542V566M930.5 543V547M931.5 544V805M932.5 545V1002M933.5 546V1275M934.5 600V1277M935.5 1273V1278M936.5 1275V1278M937.5 1031V1278M938.5 1031V1278M939.5 1060V1183M940.5 1179V1184M941.5 1181V1193M942.5 1157V1235M943.5 1152V1235M944.5 1147V1159M945.5 1142V1154M946.5 1140V1217M947.5 1095V1217M948.5 1088V1217M949.5 1081V1097M950.5 1075V1090M951.5 1072V1183M952.5 964V1183M953.5 940V1183M954.5 917V966M955.5 893V942M956.5 886V1119M957.5 729V1119M958.5 682V1119M959.5 635V731M960.5 589V684M961.5 576V1007M962.5 398V1007M963.5 364V1007M964.5 329V400M965.5 295V366M966.5 287V872M967.5 244V872M968.5 237V862M969.5 235V258M970.5 235V288M971.5 256V842M972.5 286V842M973.5 353V791M974.5 378V465M975.5 420V508M976.5 463V923M977.5 506V923M978.5 533V848M979.5 541V570M980.5 554V583M981.5 568V992M982.5 581V992M983.5 589V879M984.5 592V604M985.5 597V609M986.5 602V994M987.5 600V994M988.5 600V846M989.5 602V609M990.5 605V612M991.5 607V1001M992.5 610V1001M993.5 627V822M994.5 631V645M995.5 637V685M996.5 643V1002M997.5 646V1002M998.5 645V795M999.5 644V648M1000.5 643V716M1001.5 643V999M1002.5 638V999M1003.5 636V753M1004.5 633V640M1005.5 631V731M1006.5 631V954M1007.5 623V954M1008.5 617V696M1009.5 612V625M1010.5 608V763M1011.5 608V982M1012.5 595V982M1013.5 592V639M1014.5 589V597M1015.5 587V787M1016.5 585V973M1017.5 584V973M1018.5 583V587M1019.5 582V586M1020.5 581V828M1021.5 581V979M1022.5 584V979M1023.5 584V588M1024.5 585V589M1025.5 586V855M1026.5 586V956M1027.5 585V956M1028.5 584V588M1029.5 582V587M1030.5 582V895M1031.5 579V960M1032.5 574V960M1033.5 568V581M1034.5 563V576M1035.5 560V946M1036.5 554V974M1037.5 553V974M1038.5 552V556M1039.5 552V555M1040.5 551V961M1041.5 550V961M1042.5 549V961M1043.5 548V552M1044.5 547V551M1045.5 547V974M1046.5 546V974M1047.5 546V974M1048.5 546V548M1049.5 546V548M1050.5 546V950M1051.5 546V950M1052.5 557V950M1053.5 557V559M1054.5 557V559M1055.5 557V954M1056.5 555V954M1057.5 553V954M1058.5 551V557M1059.5 549V555M1060.5 548V989M1061.5 533V989M1062.5 533V989M1063.5 532V535M1064.5 532V535M1065.5 532V973M1066.5 532V973M1067.5 532V973M1068.5 532V534M1069.5 531V534M1070.5 531V978M1071.5 531V978M1072.5 531V966M1073.5 531V533M1074.5 531V533M1075.5 531V990M1076.5 530V990M1077.5 530V930M1078.5 529V532M1079.5 529V532M1080.5 529V969M1081.5 528V969M1082.5 528V866M1083.5 528V530M1084.5 527V530M1085.5 527V952M1086.5 527V952M1087.5 526V808M1088.5 526V529M1089.5 526V528M1090.5 526V993M1091.5 526V993M1092.5 526V786M1093.5 526V528M1094.5 526V555M1095.5 526V982M1096.5 526V982M1097.5 526V733M1098.5 526V528M1099.5 526V603M1100.5 526V986M1101.5 526V986M1102.5 526V687M1103.5 526V528M1104.5 526V650M1105.5 526V984M1106.5 526V984M1107.5 526V638M1108.5 530V541M1109.5 535V716M1110.5 539V1003M1111.5 542V1003M1112.5 539V610M1113.5 536V544M1114.5 534V743M1115.5 534V969M1116.5 528V969M1117.5 528V545M1118.5 528V531M1119.5 528V799M1120.5 529V992M1121.5 529V992M1122.5 529V532M1123.5 530V533M1124.5 530V832M1125.5 531V970M1126.5 535V970M1127.5 536V548M1128.5 541V552M1129.5 546V892M1130.5 550V981M1131.5 554V981M1132.5 554V557M1133.5 555V557M1134.5 555V941M1135.5 555V986M1136.5 556V986M1137.5 556V559M1138.5 557V559M1139.5 557V966M1140.5 557V967M1141.5 558V967M1142.5 558V561M1143.5 559V562M1144.5 559V954M1145.5 560V954M1146.5 560V954M1147.5 561V564M1148.5 561V564M1149.5 562V976M1150.5 562V976M1151.5 563V976M1152.5 563V566M1153.5 564V567M1154.5 564V989M1155.5 565V989M1156.5 565V989M1157.5 566V569M1158.5 566V569M1159.5 567V982M1160.5 567V982M1161.5 568V982M1162.5 568V1275M1163.5 617V1277M1164.5 1273V1278M1165.5 1275V1278M1166.5 1275V1277M1167.5 1275V1277M1168.5 1275V1277" fill="none" stroke="#c8a400" stroke-width="1" shape-rendering="crispEdges"/>
<path d="M152 1275.2L157.2 1276.4L162.1 1275.3L167.5 1274.5L172.5 1275.6L178.7 1274.2L182.9 1274.2L189.1 1275.8L192.3 1276.6L199.1 1275.7L204.6 1274.4L207.7 1275.4L210.9 1274.5L214.9 1274.1L219.7 1275.1L226.1 1275.3L231.7 1275.3L237.3 1275.2L241.4 1276.6L248.4 1276.2L254.2 1274.8L258.2 1274.8L261.4 1276L266 1276.2L270.6 1276.5L277 1274L280.8 1276.4L285.7 1276.5L290.3 1274.2L295.8 1276L299.9 1274.2L304.2 1276.5L310.2 1274.3L314.2 1274.3L317.5 1276.1L321.2 1275.5L326 1274.5L331.9 1274.3L337.5 1274.3L342.2 1274.6L346.2 1276.5L352.4 1274.8L359 1274.5L363.6 1276.2L369.1 1274.3L376.1 1274.6L380.1 1276L384.4 1274.8L387.7 1274.2L393.1 1274.6L398.5 1275L403.3 1276.5L408.2 1275.5L414.7 1274.5L418.3 1276.4L424.6 1274.6L428.3 1275.9L435.1 1274.5L441.9 1276.3L447.3 1275.1L450.7 1274.1L457.6 1274.6L463.4 1274.7L469.7 1275.6L473.9 1274.5L479.5 1275.3" fill="none" stroke="#c8a400" stroke-width="3.8" stroke-linejoin="round"/>
<path d="M1167 1275.2L1172.6 1275.7L1176.2 1274L1180.7 1274.7L1186.9 1275.8L1192.3 1275.5L1198 1274.4L1202.8 1274.4L1209.4 1274.2L1215.7 1274.2L1221.4 1274.9L1226 1276.2L1229.1 1274.2L1235.8 1275.3L1239.1 1276.6L1245.9 1274.3L1250.6 1274.4L1254.8 1275.6L1258.5 1275.8L1261.7 1274.4L1268 1275L1272.6 1275.5L1277.6 1275L1280.7 1275.9L1287.5 1276.5L1293.2 1274.9L1297.6 1275.8L1303.3 1274.3L1307.3 1274.9L1312.3 1276.1L1317.3 1274.1L1323.6 1275.1L1328.7 1274.6L1333.4 1275L1339.5 1274.3L1344.7 1274.5L1350.5 1274.1L1354.6 1274.9L1360.1 1274.1L1365 1274.5L1369.1 1275.2L1375.9 1275.3L1382.8 1274.4L1389.5 1274.9L1393.2 1275.9L1399.9 1274L1403.9 1276L1408.3 1274.6L1411.3 1274.1L1416.8 1276.6L1423.8 1275.3L1426.9 1274.8L1433 1276.2L1438.6 1274.6L1443.7 1275.2L1449.2 1274.7L1456 1276.3L1459.7 1274.8L1466.1 1274.7L1472.9 1275.3L1478.7 1275.8L1482.6 1274.7L1486.6 1275.8L1492.4 1274.3L1498.9 1275.1L1502.9 1275.1L1509.8 1275.5L1515.3 1276.4L1522.1 1276L1526.8 1275.5L1533.4 1276.1L1538.7 1274.9L1543.2 1275.9L1548.5 1274L1554.3 1276.3L1560.5 1276.3L1567.1 1275.4L1573.3 1275L1576.7 1274.9L1580.9 1276.4L1586.7 1275.4L1592.2 1274.3L1597.3 1275.8L1601.9 1274.6L1606.5 1274.8L1612.3 1274.4L1615.6 1274.8L1621.4 1276L1627 1276.4L1631.5 1274.1L1636.5 1275.2L1640.2 1275.7L1644.5 1274.6L1648.8 1276.5L1651.9 1274.9L1656 1274.5L1660.7 1274.6L1667.4 1275.3L1673.2 1274.4L1678.1 1275.6L1684.4 1274.6L1689.3 1276.2L1695.6 1274.6L1700.7 1276L1705.3 1275.8L1711 1276.5L1716.2 1275.8L1720.6 1275.9L1724.9 1275.3L1729.3 1274.8L1732.9 1274.6L1738 1274.7L1741.2 1276.1L1745.4 1276.4L1750.8 1275L1757.3 1276.3L1761.5 1274.3L1767.1 1276.2L1772.5 1276L1777.2 1275.6L1781.2 1275.1L1785.8 1275L1790.4 1276.1L1794 1274.5L1798.1 1276.5L1803.1 1274.1L1809.5 1276.3L1815.8 1274.9L1821.7 1274.8L1825.3 1276.2L1831.6 1274.5L1838.1 1274.1L1842.3 1274L1846 1274.4L1851.9 1274.8L1855.7 1274.5L1859.9 1276.2L1865.3 1274.3L1871.1 1275.4L1875.9 1275.4L1881.5 1276.1L1886.5 1275.7L1891.4 1275.6L1895.9 1275.1L1901 1275.9L1905.1 1276.4L1910.1 1276.2L1915.8 1276.5L1921.6 1275.1L1926.2 1275.6L1932.2 1276.2L1935.7 1274.2L1939.1 1274.2L1942.4 1274L1946.4 1274.3L1952.1 1275.6L1959 1276.5L1965 1276.5L1968.1 1274.6L1974.8 1275.2L1978.6 1276L1983.3 1275.4L1987.6 1274.6L1990.9 1275.6L1997.7 1276.6L2003.8 1276.4L2008.2 1274.8L2014.9 1275.6L2020.6 1274L2024.5 1275.3L2030.4 1276.1L2036.5 1274.9L2041 1276.2L2047.9 1275.3L2051.7 1275.6L2056.9 1274.9L2060.8 1275L2066.2 1274.3L2071.4 1276.5L2077.4 1274.7L2082.1 1274.3L2088 1275.6L2091.7 1275.4L2097.1 1275.5L2101.6 1274.8L2106 1276.6L2110.3 1275.3L2115.2 1274.4L2119.8 1274.5L2124.1 1275L2128.5 1276.4L2132.7 1274.9L2138.3 1275L2143.3 1275.7L2146.6 1275.7L2150 1274.7L2156.3 1276.6L2162 1274.4L2166.7 1274.7L2173.1 1274.6L2176.9 1275.7L2182.4 1275.5L2187.3 1276.5L2192.2 1276.4L2196.7 1275.2L2201.2 1275.9L2207.2 1274.6L2212.3 1275.9L2217.3 1275.7L2222.8 1275.9L2227.2 1274.8L2230.3 1276.3L2236.4 1275L2243.3 1276.3L2246.9 1276.2L2251.6 1274.8L2255.6 1275.1L2258.8 1274.1L2262.3 1274.8L2265.9 1274.3L2272.3 1275L2277.2 1275.6L2284 1274.4L2287.9 1276.2L2294.5 1276.4L2299.6 1275L2303.4 1276.4L2309.4 1275.4L2315.6 1274.7L2320.7 1276.4L2324.2 1275.6L2327.9 1276.2L2334.3 1275.7L2339 1274.1L2344 1274.9L2348.6 1274.2L2355.3 1275.4L2360.5 1276.2L2367.1 1275.4L2372.3 1276.2L2376.8 1276.3L2379.9 1276.1L2385 1275.6L2392 1274.6L2396.6 1276.1L2402.6 1275.4L2408.7 1275.8L2415.2 1275.7L2419.6 1274.7L2422.9 1274.3L2426.1 1276.5L2429.7 1275.6L2433.2 1276.5L2438.3 1274.5L2444.6 1276.2L2451.6 1274.6L2456.2 1275.7L2460.3 1275.5L2466.1 1276L2472.4 1276L2476.5 1276L2481.3 1274.4L2484.4 1275.6L2488.8 1274.2L2493.7 1275.1L2498 1275.5L2503.2 1275.4L2510.2 1276.4L2514.3 1276.3L2518.6 1276.4L2521.8 1274.8L2528.6 1275.7L2534.4 1274.5L2537.9 1276.5L2541.1 1274.5L2545.9 1276.1L2551.6 1276.6L2557.7 1275.1L2564.3 1274.8L2567.5 1276.5L2574.1 1275.7L2579 1274.5L2582.9 1274.2L2586.2 1275.2L2592.8 1276.4L2597.9 1275.8L2602.8 1276L2608.6 1276.6L2615 1275.8L2620.3 1274.4L2625.2 1275.2L2628.8 1274.5L2633.5 1274.5L2639 1274.9L2645.9 1275.8L2651 1275.1L2655.6 1274.5L2662.4 1276.4L2668 1275.7L2671.6 1275.4L2675.3 1274.8L2680.6 1274.4L2684.5 1275.9L2689.5 1276.3L2693.1 1274.2L2699.9 1275.6L2705.6 1275.4L2709.2 1276.5L2714.2 1276.4L2717.8 1274.7L2723 1274.6L2729.4 1274.7L2732.8 1274.4L2736.8 1276.5L2743.4 1275.7L2748.1 1274.1L2754.4 1274.3L2758.2 1275.1L2764.6 1274.5L2767.9 1276.4L2770.9 1275.9L2774.5 1274.8L2778.3 1275.1L2785 1276.2L2790.1 1274.2L2793.8 1274.8L2800 1276.4L2803.1 1274.9L2810 1274.4L2813.3 1274.7L2819.8 1274.7L2825.7 1274.3L2831.4 1274.4L2836.7 1275.9L2843.3 1275.1L2850.2 1275.1L2857 1276.4L2864 1274.3L2868.1 1275.8L2874.6 1274.7L2880.7 1275.2L2883.7 1274.2L2886.7 1274.6L2893.5 1275.8L2899.9 1276.4L2904.5 1275.8L2910.1 1275.8L2913.5 1276.3L2917.1 1275.2L2922.9 1275.9L2929.2 1274.8L2933.4 1275.9L2936.5 1276.3L2940.8 1275L2945.1 1275.9L2948.8 1274.4L2952 1274.3L2957.5 1276.6L2960.5 1275.2L2965 1274.8L2969.3 1274.3L2974 1274.7L2977.3 1274.4L2984 1275.9L2990.9 1276.1L2996.9 1274.6L3000.3 1276.6L3006 1275.9L3009.6 1276.1L3014.7 1274.2L3018.6 1276.5L3024.1 1274.2L3027.4 1276L3031.8 1275.2L3035.4 1274.5L3040.4 1275.1L3044.1 1274.4L3048.9 1274.3L3052.1 1275.2L3055.3 1275.9L3061.4 1275.8L3068.2 1274.4L3072.9 1275.1L3076.2 1276.2L3079.3 1276.6L3085 1276.6L3088.3 1276.3L3095.1 1276L3100.5 1275.7L3105.4 1276.2L3110.7 1275.4L3115.3 1275.6L3120.7 1276.4L3126.8 1274.9L3132.6 1274.6L3137.6 1275.4L3143.5 1274.2L3147.1 1274.5L3152.5 1274.4L3157.8 1276.3L3162.5 1274.6L3167.9 1275.1L3172.6 1274.5L3178.4 1274.9L3185.3 1275.3L3191 1276.4L3198 1274.1L3204.7 1274.3L3211.5 1276.1L3215.5 1275.9L3220.7 1275.2L3226.3 1275.2L3231.9 1275.8L3234.9 1275.7L3240.7 1276.3L3245.9 1275.4L3249.4 1274.5L3256 1274.2L3262.6 1274.3L3267.2 1275.6L3270.3 1275.2L3276.5 1275L3280.2 1274.2L3287 1274.3L3292.7 1275.7L3296.8 1275.5L3302.5 1274.5L3306.5 1276.4L3310.3 1275.3L3315.1 1276L3321.6 1276L3327.1 1275.4L3330.4 1275.5L3335.2 1276L3339.7 1274.3L3344.2 1276.2L3349.2 1275.7L3352.4 1274.6L3356.5 1275.3L3360 1276.5L3364.3 1274L3368.3 1275.3L3373.7 1276.1L3377.1 1276.5L3383.5 1275.3L3389.1 1274.8L3392.7 1274L3399.5 1276.3L3404.3 1275.6L3409.2 1275.8L3412.6 1276L3416.3 1275.5L3421.8 1276.2L3427.3 1274.5L3433.5 1275L3438.8 1276.1L3445.7 1274.3L3450.5 1274.8L3456.9 1275L3457 1275.3" fill="none" stroke="#c8a400" stroke-width="3.8" stroke-linejoin="round"/>
<path d="M1560 1276V1265M3210.5 1276V1266" stroke="#c8a400" stroke-width="3"/>
<path d="M480 912.3H1164" stroke="#1478b0" stroke-width="8.4" opacity="0.5"/>
<path d="M152 912H3457" stroke="#1ea8ea" stroke-width="2.2"/>
<path d="M480 912H1164" stroke="#a8e8b0" stroke-width="2.2" opacity="0.4"/>
<path d="M175 292H3433M175 416H3433M175 540H3433M175 664H3433M175 912H3433M175 1036H3433M175 1160H3433M175 1284H3433" stroke="#b4b4b4" stroke-width="2" stroke-dasharray="1 2" opacity="0.85"/>
<path d="M482.5 170V1407M813 170V1407M1143.5 170V1407M1474 170V1407M2135 170V1407M2465.5 170V1407M2796 170V1407M3126.5 170V1407" stroke="#b4b4b4" stroke-width="2" stroke-dasharray="1 2" opacity="0.85"/>
<path d="M153 788H3457M1804.2 170V1407" stroke="#757575" stroke-width="2" stroke-dasharray="4 2"/>
<path d="M153 292h23M3457 292h-24M153 416h23M3457 416h-24M153 540h23M3457 540h-24M153 664h23M3457 664h-24M153 1036h23M3457 1036h-24M153 1160h23M3457 1160h-24M153 1284h23M3457 1284h-24" stroke="#9a9a9a" stroke-width="1.8"/>
<path d="M152.5 169V1408M3457.5 169V1408" stroke="#8e8e8e" stroke-width="1.3"/>
<path d="M152 169.6H3458" stroke="#727272" stroke-width="1.2"/>
<path d="M152 1407.9H3458" stroke="#6c6c6c" stroke-width="2"/>
<path d="M153 180.4h5.7M153 192.8h5.7M153 205.2h5.7M153 217.6h5.7M153 230h11.7M153 242.4h5.7M153 254.8h5.7M153 267.2h5.7M153 279.6h5.7M153 304.4h5.7M153 316.8h5.7M153 329.2h5.7M153 341.6h5.7M153 354h11.7M153 366.4h5.7M153 378.8h5.7M153 391.2h5.7M153 403.6h5.7M153 428.4h5.7M153 440.8h5.7M153 453.2h5.7M153 465.6h5.7M153 478h11.7M153 490.4h5.7M153 502.8h5.7M153 515.2h5.7M153 527.6h5.7M153 552.4h5.7M153 564.8h5.7M153 577.2h5.7M153 589.6h5.7M153 602h11.7M153 614.4h5.7M153 626.8h5.7M153 639.2h5.7M153 651.6h5.7M153 676.4h5.7M153 688.8h5.7M153 701.2h5.7M153 713.6h5.7M153 726h11.7M153 738.4h5.7M153 750.8h5.7M153 763.2h5.7M153 775.6h5.7M153 800.4h5.7M153 812.8h5.7M153 825.2h5.7M153 837.6h5.7M153 850h11.7M153 862.4h5.7M153 874.8h5.7M153 887.2h5.7M153 899.6h5.7M153 924.4h5.7M153 936.8h5.7M153 949.2h5.7M153 961.6h5.7M153 974h11.7M153 986.4h5.7M153 998.8h5.7M153 1011.2h5.7M153 1023.6h5.7M153 1048.4h5.7M153 1060.8h5.7M153 1073.2h5.7M153 1085.6h5.7M153 1098h11.7M153 1110.4h5.7M153 1122.8h5.7M153 1135.2h5.7M153 1147.6h5.7M153 1172.4h5.7M153 1184.8h5.7M153 1197.2h5.7M153 1209.6h5.7M153 1222h11.7M153 1234.4h5.7M153 1246.8h5.7M153 1259.2h5.7M153 1271.6h5.7M153 1296.4h5.7M153 1308.8h5.7M153 1321.2h5.7M153 1333.6h5.7M153 1346h11.7M153 1358.4h5.7M153 1370.8h5.7M153 1383.2h5.7M153 1395.6h5.7M3457 180.4h-6.7M3457 192.8h-6.7M3457 205.2h-6.7M3457 217.6h-6.7M3457 230h-12.7M3457 242.4h-6.7M3457 254.8h-6.7M3457 267.2h-6.7M3457 279.6h-6.7M3457 304.4h-6.7M3457 316.8h-6.7M3457 329.2h-6.7M3457 341.6h-6.7M3457 354h-12.7M3457 366.4h-6.7M3457 378.8h-6.7M3457 391.2h-6.7M3457 403.6h-6.7M3457 428.4h-6.7M3457 440.8h-6.7M3457 453.2h-6.7M3457 465.6h-6.7M3457 478h-12.7M3457 490.4h-6.7M3457 502.8h-6.7M3457 515.2h-6.7M3457 527.6h-6.7M3457 552.4h-6.7M3457 564.8h-6.7M3457 577.2h-6.7M3457 589.6h-6.7M3457 602h-12.7M3457 614.4h-6.7M3457 626.8h-6.7M3457 639.2h-6.7M3457 651.6h-6.7M3457 676.4h-6.7M3457 688.8h-6.7M3457 701.2h-6.7M3457 713.6h-6.7M3457 726h-12.7M3457 738.4h-6.7M3457 750.8h-6.7M3457 763.2h-6.7M3457 775.6h-6.7M3457 800.4h-6.7M3457 812.8h-6.7M3457 825.2h-6.7M3457 837.6h-6.7M3457 850h-12.7M3457 862.4h-6.7M3457 874.8h-6.7M3457 887.2h-6.7M3457 899.6h-6.7M3457 924.4h-6.7M3457 936.8h-6.7M3457 949.2h-6.7M3457 961.6h-6.7M3457 974h-12.7M3457 986.4h-6.7M3457 998.8h-6.7M3457 1011.2h-6.7M3457 1023.6h-6.7M3457 1048.4h-6.7M3457 1060.8h-6.7M3457 1073.2h-6.7M3457 1085.6h-6.7M3457 1098h-12.7M3457 1110.4h-6.7M3457 1122.8h-6.7M3457 1135.2h-6.7M3457 1147.6h-6.7M3457 1172.4h-6.7M3457 1184.8h-6.7M3457 1197.2h-6.7M3457 1209.6h-6.7M3457 1222h-12.7M3457 1234.4h-6.7M3457 1246.8h-6.7M3457 1259.2h-6.7M3457 1271.6h-6.7M3457 1296.4h-6.7M3457 1308.8h-6.7M3457 1321.2h-6.7M3457 1333.6h-6.7M3457 1346h-12.7M3457 1358.4h-6.7M3457 1370.8h-6.7M3457 1383.2h-6.7M3457 1395.6h-6.7" stroke="#6a6a6a" stroke-width="2"/>
<path d="M185.1 170v16M218.1 170v16M251.1 170v16M284.2 170v16M317.2 170v33M350.3 170v16M383.3 170v16M416.4 170v16M449.4 170v16M482.5 170v33M515.5 170v16M548.6 170v16M581.6 170v16M614.7 170v16M647.8 170v33M680.8 170v16M713.8 170v16M746.9 170v16M779.9 170v16M813 170v33M846 170v16M879.1 170v16M912.1 170v16M945.2 170v16M978.2 170v33M1011.3 170v16M1044.3 170v16M1077.4 170v16M1110.4 170v16M1143.5 170v33M1176.5 170v16M1209.6 170v16M1242.6 170v16M1275.7 170v16M1308.8 170v33M1341.8 170v16M1374.8 170v16M1407.9 170v16M1440.9 170v16M1474 170v33M1507 170v16M1540.1 170v16M1573.1 170v16M1606.2 170v16M1639.2 170v33M1672.3 170v16M1705.3 170v16M1738.4 170v16M1771.4 170v16M1804.5 170v33M1837.5 170v16M1870.6 170v16M1903.6 170v16M1936.7 170v16M1969.7 170v33M2002.8 170v16M2035.8 170v16M2068.9 170v16M2101.9 170v16M2135 170v33M2168 170v16M2201.1 170v16M2234.1 170v16M2267.2 170v16M2300.2 170v33M2333.3 170v16M2366.3 170v16M2399.4 170v16M2432.4 170v16M2465.5 170v33M2498.5 170v16M2531.6 170v16M2564.6 170v16M2597.7 170v16M2630.8 170v33M2663.8 170v16M2696.8 170v16M2729.9 170v16M2762.9 170v16M2796 170v33M2829 170v16M2862.1 170v16M2895.1 170v16M2928.2 170v16M2961.2 170v33M2994.3 170v16M3027.3 170v16M3060.4 170v16M3093.4 170v16M3126.5 170v33M3159.5 170v16M3192.6 170v16M3225.6 170v16M3258.7 170v16M3291.7 170v33M3324.8 170v16M3357.8 170v16M3390.9 170v16M3423.9 170v16" stroke="#505050" stroke-width="2"/>
<path d="M185.1 1407v-16M218.1 1407v-16M251.1 1407v-16M284.2 1407v-16M317.2 1407v-33M350.3 1407v-16M383.3 1407v-16M416.4 1407v-16M449.4 1407v-16M482.5 1407v-33M515.5 1407v-16M548.6 1407v-16M581.6 1407v-16M614.7 1407v-16M647.8 1407v-33M680.8 1407v-16M713.8 1407v-16M746.9 1407v-16M779.9 1407v-16M813 1407v-33M846 1407v-16M879.1 1407v-16M912.1 1407v-16M945.2 1407v-16M978.2 1407v-33M1011.3 1407v-16M1044.3 1407v-16M1077.4 1407v-16M1110.4 1407v-16M1143.5 1407v-33M1176.5 1407v-16M1209.6 1407v-16M1242.6 1407v-16M1275.7 1407v-16M1308.8 1407v-33M1341.8 1407v-16M1374.8 1407v-16M1407.9 1407v-16M1440.9 1407v-16M1474 1407v-33M1507 1407v-16M1540.1 1407v-16M1573.1 1407v-16M1606.2 1407v-16M1639.2 1407v-33M1672.3 1407v-16M1705.3 1407v-16M1738.4 1407v-16M1771.4 1407v-16M1804.5 1407v-33M1837.5 1407v-16M1870.6 1407v-16M1903.6 1407v-16M1936.7 1407v-16M1969.7 1407v-33M2002.8 1407v-16M2035.8 1407v-16M2068.9 1407v-16M2101.9 1407v-16M2135 1407v-33M2168 1407v-16M2201.1 1407v-16M2234.1 1407v-16M2267.2 1407v-16M2300.2 1407v-33M2333.3 1407v-16M2366.3 1407v-16M2399.4 1407v-16M2432.4 1407v-16M2465.5 1407v-33M2498.5 1407v-16M2531.6 1407v-16M2564.6 1407v-16M2597.7 1407v-16M2630.8 1407v-33M2663.8 1407v-16M2696.8 1407v-16M2729.9 1407v-16M2762.9 1407v-16M2796 1407v-33M2829 1407v-16M2862.1 1407v-16M2895.1 1407v-16M2928.2 1407v-16M2961.2 1407v-33M2994.3 1407v-16M3027.3 1407v-16M3060.4 1407v-16M3093.4 1407v-16M3126.5 1407v-33M3159.5 1407v-16M3192.6 1407v-16M3225.6 1407v-16M3258.7 1407v-16M3291.7 1407v-33M3324.8 1407v-16M3357.8 1407v-16M3390.9 1407v-16M3423.9 1407v-16" stroke="#6a6a6a" stroke-width="2"/>
<path d="M152.5 1273.5L174 1284.8 152.5 1296z" fill="#ffd500"/>
<path d="M3457.5 1025.5L3436 1036.8 3457.5 1048z" fill="#ffd500"/>
<path d="M470.5 170H492.6L481.6 191z" fill="#fff"/>
<rect x="476.6" y="200" width="236" height="1092" fill="none" stroke="#a30d18" stroke-width="3"/>
<text x="483.2" y="228" font-size="19.7" fill="#fff" textLength="69" lengthAdjust="spacingAndGlyphs">Zoom 1</text>
<path d="M478.7 170V1408M1163.5 169V1408" stroke="#c8142a" stroke-width="3"/>
<rect x="176.5" y="216" width="155" height="86" fill="#000"/>
<text x="193.4" y="240.7" font-size="20.2" fill="#fff" textLength="131.6" lengthAdjust="spacingAndGlyphs">X1: -195.16 ms</text>
<text x="193.4" y="267.8" font-size="20.2" fill="#fff" textLength="119.1" lengthAdjust="spacingAndGlyphs">C1: 886.3 mA</text>
<text x="193.4" y="294.6" font-size="20.2" fill="#fff" textLength="99.3" lengthAdjust="spacingAndGlyphs">C2: 44.31 V</text>
<text x="3.9" y="191.2" font-size="19.7" fill="#ffd500" textLength="32.4" lengthAdjust="spacingAndGlyphs">900</text>
<text x="78.9" y="191.2" font-size="19.7" fill="#19b5f0" textLength="21.6" lengthAdjust="spacingAndGlyphs">45</text>
<rect x="0" y="189.9" width="112" height="4" fill="#000"/>
<text x="3.9" y="312.5" font-size="19.7" fill="#ffd500" textLength="32.4" lengthAdjust="spacingAndGlyphs">800</text>
<text x="78.9" y="312.5" font-size="19.7" fill="#19b5f0" textLength="21.6" lengthAdjust="spacingAndGlyphs">40</text>
<rect x="0" y="311.2" width="112" height="4" fill="#000"/>
<text x="3.9" y="433.8" font-size="19.7" fill="#ffd500" textLength="32.4" lengthAdjust="spacingAndGlyphs">700</text>
<text x="78.9" y="433.8" font-size="19.7" fill="#19b5f0" textLength="21.6" lengthAdjust="spacingAndGlyphs">35</text>
<rect x="0" y="432.5" width="112" height="4" fill="#000"/>
<text x="3.9" y="555.2" font-size="19.7" fill="#ffd500" textLength="32.4" lengthAdjust="spacingAndGlyphs">600</text>
<text x="78.9" y="555.2" font-size="19.7" fill="#19b5f0" textLength="21.6" lengthAdjust="spacingAndGlyphs">30</text>
<rect x="0" y="553.9" width="112" height="4" fill="#000"/>
<text x="3.9" y="676.5" font-size="19.7" fill="#ffd500" textLength="32.4" lengthAdjust="spacingAndGlyphs">500</text>
<text x="78.9" y="676.5" font-size="19.7" fill="#19b5f0" textLength="21.6" lengthAdjust="spacingAndGlyphs">25</text>
<rect x="0" y="675.2" width="112" height="4" fill="#000"/>
<text x="3.9" y="797.8" font-size="19.7" fill="#ffd500" textLength="32.4" lengthAdjust="spacingAndGlyphs">400</text>
<text x="78.9" y="797.8" font-size="19.7" fill="#19b5f0" textLength="21.6" lengthAdjust="spacingAndGlyphs">20</text>
<rect x="0" y="796.5" width="112" height="4" fill="#000"/>
<text x="3.9" y="919.1" font-size="19.7" fill="#ffd500" textLength="32.4" lengthAdjust="spacingAndGlyphs">300</text>
<text x="78.9" y="919.1" font-size="19.7" fill="#19b5f0" textLength="21.6" lengthAdjust="spacingAndGlyphs">15</text>
<rect x="0" y="917.8" width="112" height="4" fill="#000"/>
<text x="3.9" y="1040.4" font-size="19.7" fill="#ffd500" textLength="32.4" lengthAdjust="spacingAndGlyphs">200</text>
<text x="78.9" y="1040.4" font-size="19.7" fill="#19b5f0" textLength="21.6" lengthAdjust="spacingAndGlyphs">10</text>
<rect x="0" y="1039.1" width="112" height="4" fill="#000"/>
<text x="3.9" y="1161.8" font-size="19.7" fill="#ffd500" textLength="32.4" lengthAdjust="spacingAndGlyphs">100</text>
<text x="79.5" y="1161.8" font-size="19.7" fill="#19b5f0">5</text>
<rect x="0" y="1160.5" width="112" height="4" fill="#000"/>
<text x="3.9" y="1283.1" font-size="19.7" fill="#ffd500">0</text>
<text x="79.5" y="1283.1" font-size="19.7" fill="#19b5f0">0</text>
<rect x="0" y="1281.8" width="112" height="4" fill="#000"/>
<text x="3" y="1404.4" font-size="19.7" fill="#ffd500" textLength="39" lengthAdjust="spacingAndGlyphs">-100</text>
<text x="78.9" y="1404.4" font-size="19.7" fill="#19b5f0" textLength="17.4" lengthAdjust="spacingAndGlyphs">-5</text>
<rect x="0" y="1403.1" width="112" height="4" fill="#000"/>
<text x="132.7" y="1435.2" font-size="20.2" fill="#fff" textLength="48.6" lengthAdjust="spacingAndGlyphs">-0.2 s</text>
<text x="789.7" y="1435.2" font-size="20.2" fill="#fff" textLength="41.8" lengthAdjust="spacingAndGlyphs">0.2 s</text>
<text x="1446.6" y="1435.2" font-size="20.2" fill="#fff" textLength="41.8" lengthAdjust="spacingAndGlyphs">0.6 s</text>
<text x="1775.8" y="1435.2" font-size="20.2" fill="#fff" textLength="41.8" lengthAdjust="spacingAndGlyphs">0.8 s</text>
<text x="2105.5" y="1435.2" font-size="20.2" fill="#fff" textLength="26.1" lengthAdjust="spacingAndGlyphs">1 s</text>
<text x="2433.8" y="1435.2" font-size="20.2" fill="#fff" textLength="41.8" lengthAdjust="spacingAndGlyphs">1.2 s</text>
<text x="2762.6" y="1435.2" font-size="20.2" fill="#fff" textLength="41.8" lengthAdjust="spacingAndGlyphs">1.4 s</text>
<text x="3091.8" y="1435.2" font-size="20.2" fill="#fff" textLength="41.8" lengthAdjust="spacingAndGlyphs">1.6 s</text>
<text x="3419.1" y="1435.2" font-size="20.2" fill="#fff" textLength="41.8" lengthAdjust="spacingAndGlyphs">1.8 s</text>
<rect x="1.5" y="1410.5" width="36.5" height="35" fill="#5a5a5a" stroke="#707070" stroke-width="1" rx="3"/>
<text x="14.2" y="1435.2" font-size="20.2" fill="#fff">X</text>
<rect x="40.5" y="1410.5" width="16" height="35" fill="#5a5a5a" stroke="#707070" stroke-width="1" rx="3"/>
<path d="M43.5 1425.8h10l-5 5.5z" fill="#c0c0c0"/>
<rect x="437" y="1410.5" width="65" height="35" fill="#5a5a5a" stroke="#707070" stroke-width="1" rx="3"/>
<text x="463.6" y="1435.2" font-size="19.7" fill="#fff">1</text>
<rect x="504" y="1410.5" width="16.5" height="35" fill="#5a5a5a" stroke="#707070" stroke-width="1" rx="3"/>
<path d="M507.3 1425.8h10l-5 5.5z" fill="#c0c0c0"/>
<path d="M1123 1421a9 9 0 0 0 0 15" fill="none" stroke="#e8e8e8" stroke-width="2"/>
<rect x="1123.5" y="1410.5" width="65" height="35" fill="#5a5a5a" stroke="#707070" stroke-width="1" rx="3"/>
<text x="1150.6" y="1435.2" font-size="19.7" fill="#fff">2</text>
<rect x="1190.5" y="1410.5" width="16.5" height="35" fill="#5a5a5a" stroke="#707070" stroke-width="1" rx="3"/>
<path d="M1193.8 1425.8h10l-5 5.5z" fill="#c0c0c0"/>
<path d="M3494 237V1279" stroke="#7c6600" stroke-width="2" stroke-dasharray="9 3 3 4 6 2.5 4 9 2 3"/>
<path d="M3494 237V1279" stroke="#c8a400" stroke-width="2" stroke-dasharray="13 7 2 5 2 14 3 8 2 11 36 9 3 6 8 13"/>
<path d="M3458 1275.2L3480 1274.6 3494 1271v9l-14-2.6-22-1.2z" fill="#c8a400"/>
<rect x="0" y="1447.6" width="3497" height="10" fill="#2e2e2e"/>
<rect x="1.5" y="1448.5" width="3495" height="6" fill="#8a8a8a"/>
<rect x="0" y="0" width="3836" height="131" fill="#555555"/>
<rect x="0" y="32" width="3836" height="1" fill="#4a4a4a"/>
<rect x="0" y="33" width="3836" height="1" fill="#808080"/>
<rect x="0" y="79.4" width="3836" height="1" fill="#4a4a4a"/>
<rect x="0" y="80.4" width="3836" height="1" fill="#808080"/>
<rect x="0" y="128.6" width="3836" height="1" fill="#4a4a4a"/>
<rect x="0" y="129.7" width="3836" height="1.3" fill="#9c9c9c"/>
<text x="13.7" y="24" font-size="20.2" fill="#fff" textLength="30.4" lengthAdjust="spacingAndGlyphs">File</text>
<rect x="13.7" y="26.2" width="10.3" height="1.4" fill="#fff"/>
<text x="61.3" y="24" font-size="20.2" fill="#fff" textLength="67.6" lengthAdjust="spacingAndGlyphs">Control</text>
<rect x="61.3" y="26.2" width="12.9" height="1.4" fill="#fff"/>
<text x="146.8" y="24" font-size="20.2" fill="#fff" textLength="41.5" lengthAdjust="spacingAndGlyphs">View</text>
<rect x="146.8" y="26.2" width="11.8" height="1.4" fill="#fff"/>
<text x="208" y="24" font-size="20.2" fill="#fff" textLength="72.9" lengthAdjust="spacingAndGlyphs">Window</text>
<rect x="208" y="26.2" width="18.3" height="1.4" fill="#fff"/>
<rect x="3807" y="1.5" width="28" height="27" fill="#5c5c5c" stroke="#6c6c6c" stroke-width="1" rx="3"/>
<rect x="3810" y="5" width="15" height="12" rx="1.5" fill="#9fb2cc" stroke="#6f8fc0" stroke-width="1"/>
<rect x="3810" y="5" width="15" height="3" fill="#6c94d0"/>
<rect x="3816" y="12" width="16" height="13" rx="1.5" fill="#f2f5fa" stroke="#5f8fd8" stroke-width="1.6"/>
<rect x="3816" y="11.5" width="16" height="4" fill="#5f8fd8"/>
<rect x="7.2" y="40" width="77" height="33.3" fill="url(#exp)" stroke="#464646" stroke-width="1" rx="4"/>
<rect x="904" y="39.7" width="156.4" height="33.8" fill="#575757" stroke="#454545" stroke-width="1" rx="4"/>
<rect x="905" y="40.7" width="154.4" height="31.8" fill="none" stroke="#6a6a6a" stroke-width="1" rx="3"/>
<rect x="1324" y="39.7" width="106.4" height="33.8" fill="#575757" stroke="#454545" stroke-width="1" rx="4"/>
<rect x="1325" y="40.7" width="104.4" height="31.8" fill="none" stroke="#6a6a6a" stroke-width="1" rx="3"/>
<text x="15.4" y="65" font-size="20.2" fill="#fff" textLength="60.5" lengthAdjust="spacingAndGlyphs">Export</text>
<text x="95.7" y="65" font-size="20.2" fill="#fff" textLength="38" lengthAdjust="spacingAndGlyphs">Rec.</text>
<text x="162" y="65" font-size="20.2" fill="#fff" textLength="33.3" lengthAdjust="spacingAndGlyphs">+XY</text>
<text x="216" y="65" font-size="20.2" fill="#fff" textLength="45.4" lengthAdjust="spacingAndGlyphs">+XYZ</text>
<text x="280" y="65" font-size="20.2" fill="#fff" textLength="66.2" lengthAdjust="spacingAndGlyphs">+Zoom</text>
<text x="364.7" y="65" font-size="20.2" fill="#fff" textLength="31.3" lengthAdjust="spacingAndGlyphs">FFT</text>
<text x="414.4" y="65" font-size="20.2" fill="#fff" textLength="119.4" lengthAdjust="spacingAndGlyphs">Spectrogram</text>
<text x="554.4" y="65" font-size="20.2" fill="#fff" textLength="95.9" lengthAdjust="spacingAndGlyphs">Histogram</text>
<text x="673" y="65" font-size="20.2" fill="#fff" textLength="106.2" lengthAdjust="spacingAndGlyphs">Persistence</text>
<text x="798.4" y="65" font-size="20.2" fill="#fff" textLength="31.9" lengthAdjust="spacingAndGlyphs">Eye</text>
<text x="849.8" y="65" font-size="20.2" fill="#fff" textLength="42.7" lengthAdjust="spacingAndGlyphs">Data</text>
<text x="912.7" y="65" font-size="20.2" fill="#fff" textLength="137.7" lengthAdjust="spacingAndGlyphs">Measurements</text>
<text x="1071.7" y="65" font-size="20.2" fill="#fff" textLength="75.8" lengthAdjust="spacingAndGlyphs">Logging</text>
<text x="1165.5" y="65" font-size="20.2" fill="#fff" textLength="75" lengthAdjust="spacingAndGlyphs">Counter</text>
<text x="1259.4" y="65" font-size="20.2" fill="#fff" textLength="52.8" lengthAdjust="spacingAndGlyphs">Audio</text>
<text x="1332" y="65" font-size="20.2" fill="#fff" textLength="88.1" lengthAdjust="spacingAndGlyphs">X Cursors</text>
<text x="1441.2" y="65" font-size="20.2" fill="#fff" textLength="88.1" lengthAdjust="spacingAndGlyphs">Y Cursors</text>
<text x="1549.6" y="65" font-size="20.2" fill="#fff" textLength="54.4" lengthAdjust="spacingAndGlyphs">Notes</text>
<text x="1634" y="65" font-size="20.2" fill="#fff" textLength="57.2" lengthAdjust="spacingAndGlyphs">Digital</text>
<text x="1712.8" y="65" font-size="20.2" fill="#9b9b9b" textLength="137.7" lengthAdjust="spacingAndGlyphs">Measurements</text>
<rect x="147" y="45.5" width="1" height="22" fill="#484848"/>
<rect x="148" y="45.5" width="1" height="22" fill="#646464"/>
<rect x="1618" y="45.5" width="1" height="22" fill="#484848"/>
<rect x="1619" y="45.5" width="1" height="22" fill="#646464"/>
<rect x="3815.4" y="58.5" width="6" height="2" fill="#e8e8e8"/>
<rect x="7.2" y="86.8" width="99" height="37.4" fill="url(#btn)" stroke="#2c2c2c" stroke-width="1" rx="4"/>
<rect x="109" y="86.8" width="87.5" height="37.4" fill="url(#btn)" stroke="#2c2c2c" stroke-width="1" rx="4"/>
<path d="M10.5 91.5L33.5 105 10.5 118.6z" fill="url(#play)" stroke="#156a1c" stroke-width="1"/>
<text x="12.3" y="111.5" font-size="15.4" fill="#fff" font-weight="700" style="font-family:'Liberation Serif',serif">1</text>
<path d="M112 92L136.5 105 112 118.2z" fill="url(#play)" stroke="#156a1c" stroke-width="1"/>
<text x="41.5" y="113.5" font-size="20.2" fill="#fff" textLength="55.7" lengthAdjust="spacingAndGlyphs">Single</text>
<text x="143.4" y="113.5" font-size="20.2" fill="#fff" textLength="44.1" lengthAdjust="spacingAndGlyphs">Scan</text>
<g transform="translate(217 104) rotate(-45) scale(0.84 1) rotate(45)"><path d="M8.9 -0.3L12.6 0.8L11.9 4.2L8 3.7L6.4 6.1L8.4 9.5L5.4 11.4L3.1 8.3L0.3 8.9L-0.8 12.6L-4.2 11.9L-3.7 8L-6.1 6.4L-9.5 8.4L-11.4 5.4L-8.3 3.1L-8.9 0.3L-12.6 -0.8L-11.9 -4.2L-8 -3.7L-6.4 -6.1L-8.4 -9.5L-5.4 -11.4L-3.1 -8.3L-0.3 -8.9L0.8 -12.6L4.2 -11.9L3.7 -8L6.1 -6.4L9.5 -8.4L11.4 -5.4L8.3 -3.1z" transform="translate(1.3 1.1)" fill="#4f6676" stroke="#4f6676" stroke-width="1" stroke-linejoin="round"/><path d="M8.9 -0.3L12.6 0.8L11.9 4.2L8 3.7L6.4 6.1L8.4 9.5L5.4 11.4L3.1 8.3L0.3 8.9L-0.8 12.6L-4.2 11.9L-3.7 8L-6.1 6.4L-9.5 8.4L-11.4 5.4L-8.3 3.1L-8.9 0.3L-12.6 -0.8L-11.9 -4.2L-8 -3.7L-6.4 -6.1L-8.4 -9.5L-5.4 -11.4L-3.1 -8.3L-0.3 -8.9L0.8 -12.6L4.2 -11.9L3.7 -8L6.1 -6.4L9.5 -8.4L11.4 -5.4L8.3 -3.1zM-4.1 0a4.1 4.1 0 1 0 8.3 0a4.1 4.1 0 1 0 -8.3 0z" fill="url(#gg)" fill-rule="evenodd" stroke="#dfe3e6" stroke-width="0.8" stroke-linejoin="round"/><path d="M-4.1 0a4.1 4.1 0 1 0 8.3 0a4.1 4.1 0 1 0 -8.3 0z" fill="#3d5566"/><path d="M-4.1 0a4.1 4.1 0 1 0 8.3 0a4.1 4.1 0 1 0 -8.3 0z" transform="translate(1.5 1.2) scale(0.8)" fill="#555"/></g>
<path d="M222.8 110.2h9.5l-4.8 5.5z" fill="#c8c8c8"/>
<text x="243" y="113" font-size="20.2" fill="#fff" textLength="60.2" lengthAdjust="spacingAndGlyphs">Buffer:</text>
<rect x="332" y="87.5" width="196.7" height="34.7" fill="#272727" stroke="#1c1c1c" stroke-width="1" rx="3"/>
<rect x="507" y="88.5" width="20.7" height="32.7" fill="url(#cba)" rx="2"/>
<path d="M513 100.5h9l-4.5 -5z" fill="#8a8a8a"/>
<path d="M513 110h9l-4.5 5z" fill="#b4b4b4"/>
<text x="337.4" y="113" font-size="20.2" fill="#fff">7</text>
<path d="M544.6 91.5h7.8v9.1h9.1v7.8h-9.1v9.1h-7.8v-9.1h-9.1v-7.8h9.1z" fill="url(#pg)" stroke="#3c9a1c" stroke-width="0.8" stroke-linejoin="round"/>
<text x="574.7" y="113" font-size="20.2" fill="#fff" textLength="57.9" lengthAdjust="spacingAndGlyphs">Mode:</text>
<rect x="664.2" y="87.6" width="255.4" height="34.8" fill="url(#cbl)" stroke="#1f1f1f" stroke-width="1" rx="3"/>
<path d="M897.6 102.5h11l-5.5 6z" fill="#b4b4b4"/>
<circle cx="682.2" cy="105" r="11.5" fill="url(#scr)" stroke="#e8e8e8" stroke-width="1"/>
<path d="M676.5 108.5v-5.5a2 2 0 0 1 2-2h7.5a2 2 0 0 1 2 2v4a2 2 0 0 1-2 2h-3.5m2-2.2l-2.4 2.2 2.4 2.2" fill="none" stroke="#444" stroke-width="2"/>
<text x="699.5" y="112.7" font-size="20.2" fill="#fff" textLength="63.5" lengthAdjust="spacingAndGlyphs">Screen</text>
<text x="926.3" y="113" font-size="20.2" fill="#fff" textLength="70.1" lengthAdjust="spacingAndGlyphs">Trigger:</text>
<rect x="1016.3" y="87.6" width="196.4" height="34.8" fill="url(#cbl)" stroke="#1f1f1f" stroke-width="1" rx="3"/>
<path d="M1190.7 102.5h11l-5.5 6z" fill="#b4b4b4"/>
<text x="1022" y="112.7" font-size="20.2" fill="#fff" textLength="67.6" lengthAdjust="spacingAndGlyphs">Normal</text>
<path d="M1223 99q2-7 10-7 8 0 9 6l-2 1q-2-3-6-3-5 0-7 4z" fill="#3a3a3a" stroke="#777" stroke-width="1"/>
<rect x="1228.5" y="96" width="7.5" height="23" rx="1.5" fill="url(#ham)" stroke="#5a4410" stroke-width="0.6"/>
<text x="1258.6" y="113" font-size="20.2" fill="#fff" textLength="68.8" lengthAdjust="spacingAndGlyphs">Source:</text>
<rect x="1348.3" y="87.6" width="254.4" height="34.8" fill="url(#cbl)" stroke="#1f1f1f" stroke-width="1" rx="3"/>
<path d="M1580.7 102.5h11l-5.5 6z" fill="#b4b4b4"/>
<rect x="1355" y="92.9" width="23" height="22.8" fill="#ffd700"/>
<text x="1383.6" y="112.7" font-size="20.2" fill="#fff" textLength="91.9" lengthAdjust="spacingAndGlyphs">Channel 1</text>
<text x="1609.7" y="113" font-size="20.2" fill="#fff" textLength="47.4" lengthAdjust="spacingAndGlyphs">Type:</text>
<rect x="1699.1" y="87.6" width="196.4" height="34.8" fill="url(#cbl)" stroke="#1f1f1f" stroke-width="1" rx="3"/>
<path d="M1873.5 102.5h11l-5.5 6z" fill="#b4b4b4"/>
<path d="M1706 115.5h11.5v-22h11.5" fill="none" stroke="#151515" stroke-width="1.6"/>
<path d="M1712.5 98l10 0-5 7.5zM1712.5 113l10 0-5-7.5z" fill="#d01828"/>
<text x="1735.2" y="112.7" font-size="20.2" fill="#fff" textLength="47.4" lengthAdjust="spacingAndGlyphs">Edge</text>
<text x="1903" y="113" font-size="20.2" fill="#fff" textLength="93.4" lengthAdjust="spacingAndGlyphs">Condition:</text>
<rect x="2030.4" y="87.6" width="217.4" height="34.8" fill="url(#cbl)" stroke="#1f1f1f" stroke-width="1" rx="3"/>
<path d="M2225.8 102.5h11l-5.5 6z" fill="#b4b4b4"/>
<path d="M2037 115.5h11.5v-22h12.5" fill="none" stroke="#151515" stroke-width="1.6"/>
<path d="M2043.5 108.5h10l-5-10z" fill="#c01828"/>
<text x="2065.7" y="112.7" font-size="20.2" fill="#fff" textLength="54.7" lengthAdjust="spacingAndGlyphs">Rising</text>
<text x="2255" y="113" font-size="20.2" fill="#fff" textLength="50.9" lengthAdjust="spacingAndGlyphs">Level:</text>
<rect x="2344" y="87.6" width="197" height="34.8" fill="#272727" stroke="#1c1c1c" stroke-width="1" rx="3"/>
<rect x="2511" y="88.6" width="29" height="32.8" fill="url(#cba)" rx="2"/>
<path d="M2520 102.5h11l-5.5 6z" fill="#b4b4b4"/>
<text x="2349" y="112.7" font-size="20.2" fill="#fff" textLength="68.7" lengthAdjust="spacingAndGlyphs">200 mA</text>
<text x="2547.8" y="113" font-size="20.2" fill="#fff" textLength="49.4" lengthAdjust="spacingAndGlyphs">Hyst.:</text>
<rect x="2637.3" y="87.6" width="196.7" height="34.8" fill="#272727" stroke="#1c1c1c" stroke-width="1" rx="3"/>
<rect x="2803" y="88.6" width="30" height="32.8" fill="url(#cba)" rx="2"/>
<path d="M2812.5 102.5h11l-5.5 6z" fill="#b4b4b4"/>
<text x="2641.5" y="112.7" font-size="20.2" fill="#fff" textLength="42.9" lengthAdjust="spacingAndGlyphs">Auto</text>
<text x="2841" y="113" font-size="20.2" fill="#9b9b9b" textLength="103.6" lengthAdjust="spacingAndGlyphs">LCondition:</text>
<rect x="2968.4" y="87.6" width="216.8" height="34.8" fill="#545454" stroke="#414141" stroke-width="1" rx="3"/>
<path d="M3163.2 102.5h11l-5.5 6z" fill="#7a7a7a"/>
<path d="M2975 115h6.5v-20h9v20h9.5" fill="none" stroke="#474747" stroke-width="1.5"/>
<path d="M2978.5 105l8-5v10zM2998 105l-8-5v10z" fill="#8a8a8a"/>
<text x="3004" y="112.7" font-size="20.2" fill="#9b9b9b" textLength="41.2" lengthAdjust="spacingAndGlyphs">Less</text>
<text x="3192.7" y="113" font-size="20.2" fill="#9b9b9b" textLength="69.6" lengthAdjust="spacingAndGlyphs">Length:</text>
<rect x="3282.6" y="87.6" width="195.8" height="34.8" fill="#3a3a3a" stroke="#3e3e3e" stroke-width="1" rx="3"/>
<rect x="3448.4" y="88.6" width="29" height="32.8" fill="url(#cbd)" rx="2"/>
<path d="M3457.4 102.5h11l-5.5 6z" fill="#787878"/>
<text x="3286.3" y="112.7" font-size="20.2" fill="#a4a4a4" textLength="26.1" lengthAdjust="spacingAndGlyphs">0 s</text>
<text x="3485.8" y="113" font-size="20.2" fill="#fff" textLength="75.5" lengthAdjust="spacingAndGlyphs">HoldOff:</text>
<rect x="3575.3" y="87.6" width="196.5" height="34.8" fill="#272727" stroke="#1c1c1c" stroke-width="1" rx="3"/>
<rect x="3740.8" y="88.6" width="30" height="32.8" fill="url(#cba)" rx="2"/>
<path d="M3750.3 102.5h11l-5.5 6z" fill="#b4b4b4"/>
<text x="3579.5" y="112.7" font-size="20.2" fill="#fff" textLength="26.1" lengthAdjust="spacingAndGlyphs">0 s</text>
<rect x="3796" y="111.5" width="2.6" height="2.8" fill="#fff"/>
<rect x="3800.6" y="111.5" width="2.6" height="2.8" fill="#fff"/>
<rect x="3805.2" y="111.5" width="2.6" height="2.8" fill="#fff"/>
<path d="M3816 114.2h12l-6 6z" fill="#b4b4b4"/>
<rect x="3497" y="131" width="339" height="1795" fill="#555"/>
<rect x="3496" y="131" width="1.8" height="1795" fill="#7a7a7a"/>
<rect x="3502" y="136.7" width="30" height="30.5" fill="#595959"/>
<path d="M3506.8 149.9v4.5h12.1v3.1l7.4 -5.4l-7.4 -5.4v3.1z" fill="url(#ag2)" stroke="#2f8a1f" stroke-width="0.5"/>
<rect x="3504.8" y="171" width="300.5" height="143" fill="none" stroke="#fff" stroke-width="4"/>
<path d="M3510.8 187.3l4.2 7.6 8-14.5" fill="none" stroke="#d2d2d2" stroke-width="2.3"/>
<text x="3537.3" y="195.8" font-size="20.2" fill="#fff" textLength="44.2" lengthAdjust="spacingAndGlyphs">Time</text>
<rect x="3765.8" y="174" width="36.5" height="27" fill="#5c5c5c" stroke="#6e6e6e" stroke-width="1" rx="3"/>
<g transform="translate(3781.5 187) rotate(-45) scale(0.84 1) rotate(45)"><path d="M8.1 -0.2L11.5 0.7L10.9 3.9L7.3 3.4L5.9 5.5L7.7 8.6L5 10.4L2.8 7.6L0.2 8.1L-0.7 11.5L-3.9 10.9L-3.4 7.3L-5.5 5.9L-8.6 7.7L-10.4 5L-7.6 2.8L-8.1 0.2L-11.5 -0.7L-10.9 -3.9L-7.3 -3.4L-5.9 -5.5L-7.7 -8.6L-5 -10.4L-2.8 -7.6L-0.2 -8.1L0.7 -11.5L3.9 -10.9L3.4 -7.3L5.5 -5.9L8.6 -7.7L10.4 -5L7.6 -2.8z" transform="translate(1.3 1.1)" fill="#4f6676" stroke="#4f6676" stroke-width="1" stroke-linejoin="round"/><path d="M8.1 -0.2L11.5 0.7L10.9 3.9L7.3 3.4L5.9 5.5L7.7 8.6L5 10.4L2.8 7.6L0.2 8.1L-0.7 11.5L-3.9 10.9L-3.4 7.3L-5.5 5.9L-8.6 7.7L-10.4 5L-7.6 2.8L-8.1 0.2L-11.5 -0.7L-10.9 -3.9L-7.3 -3.4L-5.9 -5.5L-7.7 -8.6L-5 -10.4L-2.8 -7.6L-0.2 -8.1L0.7 -11.5L3.9 -10.9L3.4 -7.3L5.5 -5.9L8.6 -7.7L10.4 -5L7.6 -2.8zM-3.8 0a3.8 3.8 0 1 0 7.6 0a3.8 3.8 0 1 0 -7.6 0z" fill="url(#gg)" fill-rule="evenodd" stroke="#dfe3e6" stroke-width="0.8" stroke-linejoin="round"/><path d="M-3.8 0a3.8 3.8 0 1 0 7.6 0a3.8 3.8 0 1 0 -7.6 0z" fill="#3d5566"/><path d="M-3.8 0a3.8 3.8 0 1 0 7.6 0a3.8 3.8 0 1 0 -7.6 0z" transform="translate(1.5 1.2) scale(0.8)" fill="#5c5c5c"/></g>
<path d="M3786.4 192.4h9.5l-4.8 5.5z" fill="#c8c8c8"/>
<text x="3513.9" y="228.7" font-size="20.2" fill="#fff" textLength="77.8" lengthAdjust="spacingAndGlyphs">Position:</text>
<rect x="3622.3" y="203.2" width="179" height="35" fill="#272727" stroke="#1c1c1c" stroke-width="1" rx="3"/>
<rect x="3771.3" y="204.2" width="29" height="33" fill="url(#cba)" rx="2"/>
<path d="M3780.3 218.2h11l-5.5 6z" fill="#b4b4b4"/>
<text x="3626.3" y="228.7" font-size="20.2" fill="#fff" textLength="66.2" lengthAdjust="spacingAndGlyphs">800 ms</text>
<text x="3513.9" y="265.7" font-size="20.2" fill="#fff" textLength="49.2" lengthAdjust="spacingAndGlyphs">Base:</text>
<rect x="3622.3" y="240.3" width="179" height="35" fill="#272727" stroke="#1c1c1c" stroke-width="1" rx="3"/>
<rect x="3771.3" y="241.3" width="29" height="33" fill="url(#cba)" rx="2"/>
<path d="M3780.3 255.3h11l-5.5 6z" fill="#b4b4b4"/>
<text x="3626.3" y="265.7" font-size="20.2" fill="#fff" textLength="98.6" lengthAdjust="spacingAndGlyphs">200 ms/div</text>
<rect x="3508.8" y="278" width="292.6" height="32" fill="#595959" stroke="#474747" stroke-width="1" rx="3"/>
<path d="M3520.9 282.8h5.7v13.9h3.9l-6.8 8.6l-6.8 -8.6h3.9z" fill="url(#ag)" stroke="#2f8a1f" stroke-width="0.6"/>
<text x="3540" y="302" font-size="20.2" fill="#fff" textLength="141.6" lengthAdjust="spacingAndGlyphs">Rate, Samples...</text>
<g transform="translate(3518 335) rotate(-45) scale(0.84 1) rotate(45)"><path d="M8.9 -0.3L12.6 0.8L11.9 4.2L8 3.7L6.4 6.1L8.4 9.5L5.4 11.4L3.1 8.3L0.3 8.9L-0.8 12.6L-4.2 11.9L-3.7 8L-6.1 6.4L-9.5 8.4L-11.4 5.4L-8.3 3.1L-8.9 0.3L-12.6 -0.8L-11.9 -4.2L-8 -3.7L-6.4 -6.1L-8.4 -9.5L-5.4 -11.4L-3.1 -8.3L-0.3 -8.9L0.8 -12.6L4.2 -11.9L3.7 -8L6.1 -6.4L9.5 -8.4L11.4 -5.4L8.3 -3.1z" transform="translate(1.3 1.1)" fill="#4f6676" stroke="#4f6676" stroke-width="1" stroke-linejoin="round"/><path d="M8.9 -0.3L12.6 0.8L11.9 4.2L8 3.7L6.4 6.1L8.4 9.5L5.4 11.4L3.1 8.3L0.3 8.9L-0.8 12.6L-4.2 11.9L-3.7 8L-6.1 6.4L-9.5 8.4L-11.4 5.4L-8.3 3.1L-8.9 0.3L-12.6 -0.8L-11.9 -4.2L-8 -3.7L-6.4 -6.1L-8.4 -9.5L-5.4 -11.4L-3.1 -8.3L-0.3 -8.9L0.8 -12.6L4.2 -11.9L3.7 -8L6.1 -6.4L9.5 -8.4L11.4 -5.4L8.3 -3.1zM-4.1 0a4.1 4.1 0 1 0 8.3 0a4.1 4.1 0 1 0 -8.3 0z" fill="url(#gg)" fill-rule="evenodd" stroke="#dfe3e6" stroke-width="0.8" stroke-linejoin="round"/><path d="M-4.1 0a4.1 4.1 0 1 0 8.3 0a4.1 4.1 0 1 0 -8.3 0z" fill="#3d5566"/><path d="M-4.1 0a4.1 4.1 0 1 0 8.3 0a4.1 4.1 0 1 0 -8.3 0z" transform="translate(1.5 1.2) scale(0.8)" fill="#555"/></g>
<text x="3538.6" y="344.5" font-size="20.2" fill="#fff" textLength="72.9" lengthAdjust="spacingAndGlyphs">Options</text>
<path d="M3789.7 333h12l-6 6z" fill="#b4b4b4"/>
<rect x="3503.4" y="357.3" width="303" height="35.6" fill="url(#cbl)" stroke="#262626" stroke-width="1" rx="4"/>
<path d="M3512.8 363.8h6.3v7.3h7.3v6.3h-7.3v7.3h-6.3v-7.3h-7.3v-6.3h7.3z" fill="url(#pg)" stroke="#3c9a1c" stroke-width="0.8" stroke-linejoin="round"/>
<text x="3532.3" y="383.5" font-size="20.2" fill="#fff" textLength="117.5" lengthAdjust="spacingAndGlyphs">Add Channel</text>
<path d="M3789.7 372h12l-6 6z" fill="#b4b4b4"/>
<rect x="3504.8" y="397" width="300.5" height="146" fill="none" stroke="#ffd500" stroke-width="4"/>
<path d="M3510.8 412.9l4.2 7.6 8-14.5" fill="none" stroke="#d2d2d2" stroke-width="2.3"/>
<text x="3537.5" y="421.8" font-size="20.2" fill="#fff" textLength="131.1" lengthAdjust="spacingAndGlyphs">Channel 1 (1±)</text>
<rect x="3765.8" y="400" width="36.5" height="27" fill="#5c5c5c" stroke="#6e6e6e" stroke-width="1" rx="3"/>
<g transform="translate(3781.5 413) rotate(-45) scale(0.84 1) rotate(45)"><path d="M8.1 -0.2L11.5 0.7L10.9 3.9L7.3 3.4L5.9 5.5L7.7 8.6L5 10.4L2.8 7.6L0.2 8.1L-0.7 11.5L-3.9 10.9L-3.4 7.3L-5.5 5.9L-8.6 7.7L-10.4 5L-7.6 2.8L-8.1 0.2L-11.5 -0.7L-10.9 -3.9L-7.3 -3.4L-5.9 -5.5L-7.7 -8.6L-5 -10.4L-2.8 -7.6L-0.2 -8.1L0.7 -11.5L3.9 -10.9L3.4 -7.3L5.5 -5.9L8.6 -7.7L10.4 -5L7.6 -2.8z" transform="translate(1.3 1.1)" fill="#4f6676" stroke="#4f6676" stroke-width="1" stroke-linejoin="round"/><path d="M8.1 -0.2L11.5 0.7L10.9 3.9L7.3 3.4L5.9 5.5L7.7 8.6L5 10.4L2.8 7.6L0.2 8.1L-0.7 11.5L-3.9 10.9L-3.4 7.3L-5.5 5.9L-8.6 7.7L-10.4 5L-7.6 2.8L-8.1 0.2L-11.5 -0.7L-10.9 -3.9L-7.3 -3.4L-5.9 -5.5L-7.7 -8.6L-5 -10.4L-2.8 -7.6L-0.2 -8.1L0.7 -11.5L3.9 -10.9L3.4 -7.3L5.5 -5.9L8.6 -7.7L10.4 -5L7.6 -2.8zM-3.8 0a3.8 3.8 0 1 0 7.6 0a3.8 3.8 0 1 0 -7.6 0z" fill="url(#gg)" fill-rule="evenodd" stroke="#dfe3e6" stroke-width="0.8" stroke-linejoin="round"/><path d="M-3.8 0a3.8 3.8 0 1 0 7.6 0a3.8 3.8 0 1 0 -7.6 0z" fill="#3d5566"/><path d="M-3.8 0a3.8 3.8 0 1 0 7.6 0a3.8 3.8 0 1 0 -7.6 0z" transform="translate(1.5 1.2) scale(0.8)" fill="#5c5c5c"/></g>
<path d="M3786.4 418.4h9.5l-4.8 5.5z" fill="#c8c8c8"/>
<text x="3513.9" y="454.5" font-size="20.2" fill="#fff" textLength="59.6" lengthAdjust="spacingAndGlyphs">Offset:</text>
<rect x="3622.3" y="429.3" width="179" height="35" fill="#272727" stroke="#1c1c1c" stroke-width="1" rx="3"/>
<rect x="3771.3" y="430.3" width="29" height="33" fill="url(#cba)" rx="2"/>
<path d="M3780.3 444.3h11l-5.5 6z" fill="#b4b4b4"/>
<text x="3626.3" y="454.5" font-size="20.2" fill="#fff" textLength="75.4" lengthAdjust="spacingAndGlyphs">-400 mA</text>
<text x="3513.9" y="491.3" font-size="20.2" fill="#fff" textLength="63.1" lengthAdjust="spacingAndGlyphs">Range:</text>
<rect x="3622.3" y="466.2" width="179" height="35" fill="#272727" stroke="#1c1c1c" stroke-width="1" rx="3"/>
<rect x="3771.3" y="467.2" width="29" height="33" fill="url(#cba)" rx="2"/>
<path d="M3780.3 481.2h11l-5.5 6z" fill="#b4b4b4"/>
<text x="3626.3" y="491.3" font-size="20.2" fill="#fff" textLength="101.1" lengthAdjust="spacingAndGlyphs">100 mA/div</text>
<text x="3513.9" y="528.3" font-size="20.2" fill="#9b9b9b" textLength="86.8" lengthAdjust="spacingAndGlyphs">Coupling:</text>
<rect x="3622.8" y="503.5" width="178.5" height="35" fill="#555" stroke="#444" stroke-width="1" rx="3"/>
<path d="M3780.5 518.3h11l-5.5 6z" fill="#7e7e7e"/>
<text x="3627.5" y="528.3" font-size="20.2" fill="#9b9b9b" textLength="27.4" lengthAdjust="spacingAndGlyphs">DC</text>
<rect x="3504.8" y="547" width="300.5" height="146" fill="none" stroke="#19b5f0" stroke-width="4"/>
<path d="M3510.8 562.9l4.2 7.6 8-14.5" fill="none" stroke="#d2d2d2" stroke-width="2.3"/>
<text x="3537.5" y="571.8" font-size="20.2" fill="#fff" textLength="131.1" lengthAdjust="spacingAndGlyphs">Channel 2 (2±)</text>
<rect x="3765.8" y="550" width="36.5" height="27" fill="#5c5c5c" stroke="#6e6e6e" stroke-width="1" rx="3"/>
<g transform="translate(3781.5 563) rotate(-45) scale(0.84 1) rotate(45)"><path d="M8.1 -0.2L11.5 0.7L10.9 3.9L7.3 3.4L5.9 5.5L7.7 8.6L5 10.4L2.8 7.6L0.2 8.1L-0.7 11.5L-3.9 10.9L-3.4 7.3L-5.5 5.9L-8.6 7.7L-10.4 5L-7.6 2.8L-8.1 0.2L-11.5 -0.7L-10.9 -3.9L-7.3 -3.4L-5.9 -5.5L-7.7 -8.6L-5 -10.4L-2.8 -7.6L-0.2 -8.1L0.7 -11.5L3.9 -10.9L3.4 -7.3L5.5 -5.9L8.6 -7.7L10.4 -5L7.6 -2.8z" transform="translate(1.3 1.1)" fill="#4f6676" stroke="#4f6676" stroke-width="1" stroke-linejoin="round"/><path d="M8.1 -0.2L11.5 0.7L10.9 3.9L7.3 3.4L5.9 5.5L7.7 8.6L5 10.4L2.8 7.6L0.2 8.1L-0.7 11.5L-3.9 10.9L-3.4 7.3L-5.5 5.9L-8.6 7.7L-10.4 5L-7.6 2.8L-8.1 0.2L-11.5 -0.7L-10.9 -3.9L-7.3 -3.4L-5.9 -5.5L-7.7 -8.6L-5 -10.4L-2.8 -7.6L-0.2 -8.1L0.7 -11.5L3.9 -10.9L3.4 -7.3L5.5 -5.9L8.6 -7.7L10.4 -5L7.6 -2.8zM-3.8 0a3.8 3.8 0 1 0 7.6 0a3.8 3.8 0 1 0 -7.6 0z" fill="url(#gg)" fill-rule="evenodd" stroke="#dfe3e6" stroke-width="0.8" stroke-linejoin="round"/><path d="M-3.8 0a3.8 3.8 0 1 0 7.6 0a3.8 3.8 0 1 0 -7.6 0z" fill="#3d5566"/><path d="M-3.8 0a3.8 3.8 0 1 0 7.6 0a3.8 3.8 0 1 0 -7.6 0z" transform="translate(1.5 1.2) scale(0.8)" fill="#5c5c5c"/></g>
<path d="M3786.4 568.4h9.5l-4.8 5.5z" fill="#c8c8c8"/>
<text x="3513.9" y="604.5" font-size="20.2" fill="#fff" textLength="59.6" lengthAdjust="spacingAndGlyphs">Offset:</text>
<rect x="3622.3" y="579.3" width="179" height="35" fill="#272727" stroke="#1c1c1c" stroke-width="1" rx="3"/>
<rect x="3771.3" y="580.3" width="29" height="33" fill="url(#cba)" rx="2"/>
<path d="M3780.3 594.3h11l-5.5 6z" fill="#b4b4b4"/>
<text x="3626.3" y="604.5" font-size="20.2" fill="#fff" textLength="46.2" lengthAdjust="spacingAndGlyphs">-20 V</text>
<text x="3513.9" y="641.3" font-size="20.2" fill="#fff" textLength="63.1" lengthAdjust="spacingAndGlyphs">Range:</text>
<rect x="3622.3" y="616.2" width="179" height="35" fill="#272727" stroke="#1c1c1c" stroke-width="1" rx="3"/>
<rect x="3771.3" y="617.2" width="29" height="33" fill="url(#cba)" rx="2"/>
<path d="M3780.3 631.2h11l-5.5 6z" fill="#b4b4b4"/>
<text x="3626.3" y="641.3" font-size="20.2" fill="#fff" textLength="60.7" lengthAdjust="spacingAndGlyphs">5 V/div</text>
<text x="3513.9" y="678.3" font-size="20.2" fill="#9b9b9b" textLength="86.8" lengthAdjust="spacingAndGlyphs">Coupling:</text>
<rect x="3622.8" y="653.5" width="178.5" height="35" fill="#555" stroke="#444" stroke-width="1" rx="3"/>
<path d="M3780.5 668.3h11l-5.5 6z" fill="#7e7e7e"/>
<text x="3627.5" y="678.3" font-size="20.2" fill="#9b9b9b" textLength="27.4" lengthAdjust="spacingAndGlyphs">DC</text>
<rect x="3508.5" y="696" width="117" height="36.2" fill="#595959" stroke="#474747" stroke-width="1" rx="3"/>
<path d="M3522.4 700.5h5.7v16.4h3.9l-6.8 10.1l-6.8 -10.1h3.9z" fill="url(#ag)" stroke="#2f8a1f" stroke-width="0.6"/>
<text x="3543.8" y="721.6" font-size="20.2" fill="#fff" textLength="54.6" lengthAdjust="spacingAndGlyphs">Filters</text>
<rect x="3631.4" y="696" width="190" height="36.2" fill="#595959" stroke="#474747" stroke-width="1" rx="3"/>
<path d="M3644.9 700.5h5.7v16.4h3.9l-6.8 10.1l-6.8 -10.1h3.9z" fill="url(#ag)" stroke="#2f8a1f" stroke-width="0.6"/>
<text x="3666.7" y="721.6" font-size="20.2" fill="#fff" textLength="94.2" lengthAdjust="spacingAndGlyphs">Wavegens</text>
<rect x="3808" y="169" width="28" height="1757" fill="#555"/>
<rect x="3809.5" y="188.5" width="21" height="1711" fill="url(#chk)"/>
<rect x="3810" y="169.5" width="19" height="18.5" fill="#555" stroke="#e8e8e8" stroke-width="1"/>
<path d="M3814 181.8h11l-5.5 -5.5z" fill="#c8c8c8"/>
<rect x="3810" y="1900" width="19" height="18.5" fill="#555" stroke="#e8e8e8" stroke-width="1"/>
<path d="M3814 1906.8h11l-5.5 5.5z" fill="#c8c8c8"/>
<rect x="3526" y="1765" width="249" height="119" fill="#adadad"/>
<text x="3597.2" y="1791.8" font-size="20.6" fill="#000" textLength="106.6" lengthAdjust="spacingAndGlyphs" stroke="#000" stroke-width="0.45">My Project</text>
<text x="3595.8" y="1818.7" font-size="20.6" fill="#000" textLength="109.3" lengthAdjust="spacingAndGlyphs" stroke="#000" stroke-width="0.45">Discovery3</text>
<text x="3560.9" y="1845.6" font-size="20.6" fill="#000" textLength="179.2" lengthAdjust="spacingAndGlyphs" stroke="#000" stroke-width="0.45">SN:210415B9FB82</text>
<text x="3530.3" y="1872.5" font-size="20.6" fill="#000" textLength="240.4" lengthAdjust="spacingAndGlyphs" stroke="#000" stroke-width="0.45">2024-07-02 22:48:11.755</text>
<rect x="0" y="1456.5" width="3497" height="469.5" fill="#3a3a3a"/>
<rect x="0" y="1457" width="489" height="469" fill="#555"/>
<rect x="0.5" y="1457.5" width="488" height="29" fill="#555" stroke="#f0f0f0" stroke-width="1.2"/>
<text x="7" y="1480" font-size="20.2" fill="#fff" textLength="137.7" lengthAdjust="spacingAndGlyphs">Measurements</text>
<rect x="402" y="1461.5" width="15" height="12" rx="1.5" fill="#9fb2cc" stroke="#6f8fc0" stroke-width="1"/>
<rect x="402" y="1461.5" width="15" height="3" fill="#6c94d0"/>
<rect x="408" y="1468.5" width="16" height="13" rx="1.5" fill="#f2f5fa" stroke="#5f8fd8" stroke-width="1.6"/>
<rect x="408" y="1468" width="16" height="4" fill="#5f8fd8"/>
<rect x="433.5" y="1462" width="19" height="17" fill="#fff" stroke="#2a5fc8" stroke-width="2"/>
<rect x="433.5" y="1462" width="19" height="3.5" fill="#2a5fc8"/>
<path d="M436.5 1467.5h4.5l-4.5 4.5z" fill="#e8501c"/>
<path d="M449.5 1467.5h-4.5l4.5 4.5z" fill="#e8501c"/>
<path d="M436.5 1476.5h4.5l-4.5 -4.5z" fill="#e8501c"/>
<path d="M449.5 1476.5h-4.5l4.5 -4.5z" fill="#e8501c"/>
<path d="M464.5 1463.3l15 15M479.5 1463.3l-15 15" stroke="#a81010" stroke-width="6.2" stroke-linecap="round"/>
<path d="M464.5 1463.3l15 15M479.5 1463.3l-15 15" stroke="#ee3a30" stroke-width="4.4" stroke-linecap="round"/>
<path d="M19.8 1497h7.9v9.3h9.3v7.9h-9.3v9.3h-7.9v-9.3h-9.3v-7.9h9.3z" fill="url(#pg)" stroke="#3c9a1c" stroke-width="0.8" stroke-linejoin="round"/>
<text x="41.7" y="1519.6" font-size="20.2" fill="#fff" textLength="36.6" lengthAdjust="spacingAndGlyphs">Add</text>
<path d="M86 1519.2h11.5l-5.8 6z" fill="#b4b4b4"/>
<rect x="105.6" y="1506" width="26" height="9.2" rx="4.6" fill="url(#mg)" stroke="#8c0a14" stroke-width="0.6"/>
<path d="M139.2 1519.2h11.5l-5.8 6z" fill="#b4b4b4"/>
<rect x="161.5" y="1498" width="22" height="26.5" fill="#f6f6fa" stroke="#c4c4cc" stroke-width="1"/>
<rect x="163.5" y="1502" width="18" height="0.9" fill="#b8c4e8"/>
<rect x="163.5" y="1505.2" width="18" height="0.9" fill="#b8c4e8"/>
<rect x="163.5" y="1508.4" width="18" height="0.9" fill="#b8c4e8"/>
<rect x="163.5" y="1511.6" width="18" height="0.9" fill="#b8c4e8"/>
<rect x="163.5" y="1514.8" width="18" height="0.9" fill="#b8c4e8"/>
<rect x="163.5" y="1518" width="18" height="0.9" fill="#b8c4e8"/>
<rect x="163.5" y="1521.2" width="18" height="0.9" fill="#b8c4e8"/>
<path d="M164.5 1501l18 21.5" stroke="#e4b428" stroke-width="4"/>
<path d="M162.7 1502l18 21.5" stroke="#a87818" stroke-width="1"/>
<path d="M180 1519l3 4" stroke="#e080a0" stroke-width="3.5"/>
<text x="190" y="1519.6" font-size="20.2" fill="#fff" textLength="34.8" lengthAdjust="spacingAndGlyphs">Edit</text>
<rect x="246" y="1498.5" width="28" height="24.3" fill="#f4f4f4" stroke="#c8c8c8" stroke-width="1"/>
<rect x="246" y="1498.5" width="28" height="4" fill="#d8d8d8"/>
<rect x="248.5" y="1505.5" width="5" height="4.4" fill="#2f6fd8"/>
<rect x="256" y="1507" width="15" height="1.6" fill="#9a9a9a"/>
<rect x="248.5" y="1511.1" width="5" height="4.4" fill="#2f6fd8"/>
<rect x="256" y="1512.6" width="15" height="1.6" fill="#9a9a9a"/>
<rect x="248.5" y="1516.7" width="5" height="4.4" fill="#2f6fd8"/>
<rect x="256" y="1518.2" width="15" height="1.6" fill="#9a9a9a"/>
<text x="277.8" y="1519.6" font-size="20.2" fill="#fff" textLength="49.5" lengthAdjust="spacingAndGlyphs">Show</text>
<path d="M336.2 1519.2h11.5l-5.8 6z" fill="#b4b4b4"/>
<g transform="translate(368.3 1509) rotate(-45) scale(0.84 1) rotate(45)"><path d="M8.1 -0.2L11.5 0.7L10.9 3.9L7.3 3.4L5.9 5.5L7.7 8.6L5 10.4L2.8 7.6L0.2 8.1L-0.7 11.5L-3.9 10.9L-3.4 7.3L-5.5 5.9L-8.6 7.7L-10.4 5L-7.6 2.8L-8.1 0.2L-11.5 -0.7L-10.9 -3.9L-7.3 -3.4L-5.9 -5.5L-7.7 -8.6L-5 -10.4L-2.8 -7.6L-0.2 -8.1L0.7 -11.5L3.9 -10.9L3.4 -7.3L5.5 -5.9L8.6 -7.7L10.4 -5L7.6 -2.8z" transform="translate(1.3 1.1)" fill="#4f6676" stroke="#4f6676" stroke-width="1" stroke-linejoin="round"/><path d="M8.1 -0.2L11.5 0.7L10.9 3.9L7.3 3.4L5.9 5.5L7.7 8.6L5 10.4L2.8 7.6L0.2 8.1L-0.7 11.5L-3.9 10.9L-3.4 7.3L-5.5 5.9L-8.6 7.7L-10.4 5L-7.6 2.8L-8.1 0.2L-11.5 -0.7L-10.9 -3.9L-7.3 -3.4L-5.9 -5.5L-7.7 -8.6L-5 -10.4L-2.8 -7.6L-0.2 -8.1L0.7 -11.5L3.9 -10.9L3.4 -7.3L5.5 -5.9L8.6 -7.7L10.4 -5L7.6 -2.8zM-3.8 0a3.8 3.8 0 1 0 7.6 0a3.8 3.8 0 1 0 -7.6 0z" fill="url(#gg)" fill-rule="evenodd" stroke="#dfe3e6" stroke-width="0.8" stroke-linejoin="round"/><path d="M-3.8 0a3.8 3.8 0 1 0 7.6 0a3.8 3.8 0 1 0 -7.6 0z" fill="#3d5566"/><path d="M-3.8 0a3.8 3.8 0 1 0 7.6 0a3.8 3.8 0 1 0 -7.6 0z" transform="translate(1.5 1.2) scale(0.8)" fill="#555"/></g>
<path d="M394.4 1519.2h11.5l-5.8 6z" fill="#b4b4b4"/>
<rect x="0" y="1537" width="467" height="33" fill="url(#hdr)"/>
<rect x="0" y="1569.7" width="467" height="1.4" fill="#353535"/>
<rect x="0" y="1604.3" width="467" height="1.2" fill="#484848"/>
<rect x="0" y="1638" width="467" height="1.2" fill="#484848"/>
<rect x="69" y="1570" width="1.2" height="68" fill="#474747"/>
<rect x="68.4" y="1538" width="1" height="32" fill="#6a6a6a"/>
<rect x="69.4" y="1538" width="1" height="32" fill="#3e3e3e"/>
<rect x="139.9" y="1570" width="1.2" height="68" fill="#474747"/>
<rect x="139.3" y="1538" width="1" height="32" fill="#6a6a6a"/>
<rect x="140.3" y="1538" width="1" height="32" fill="#3e3e3e"/>
<rect x="222.4" y="1570" width="1.2" height="68" fill="#474747"/>
<rect x="221.8" y="1538" width="1" height="32" fill="#6a6a6a"/>
<rect x="222.8" y="1538" width="1" height="32" fill="#3e3e3e"/>
<rect x="0" y="1537" width="467" height="1" fill="#474747"/>
<rect x="0" y="1570" width="5.5" height="68" fill="#4a4a4a"/>
<rect x="5.5" y="1570" width="1" height="68" fill="#3e3e3e"/>
<text x="76.3" y="1562.2" font-size="20.2" fill="#fff" textLength="58.4" lengthAdjust="spacingAndGlyphs">Extent</text>
<text x="154.9" y="1562.2" font-size="20.2" fill="#fff" textLength="54.6" lengthAdjust="spacingAndGlyphs">Name</text>
<text x="320.3" y="1562.2" font-size="20.2" fill="#fff" textLength="49.9" lengthAdjust="spacingAndGlyphs">Value</text>
<text x="10.5" y="1594.9" font-size="20.2" fill="#fff" textLength="24" lengthAdjust="spacingAndGlyphs">C2</text>
<text x="73.3" y="1594.9" font-size="20.2" fill="#fff" textLength="58.1" lengthAdjust="spacingAndGlyphs">Visible</text>
<text x="144" y="1594.9" font-size="20.2" fill="#fff" textLength="74.3" lengthAdjust="spacingAndGlyphs">Average</text>
<text x="233" y="1594.9" font-size="20.2" fill="#fff" textLength="77.3" lengthAdjust="spacingAndGlyphs">15.004 V</text>
<text x="10.5" y="1629" font-size="20.2" fill="#fff" textLength="24" lengthAdjust="spacingAndGlyphs">C1</text>
<text x="73.3" y="1629" font-size="20.2" fill="#fff" textLength="49" lengthAdjust="spacingAndGlyphs">X1 X2</text>
<text x="144" y="1629" font-size="20.2" fill="#fff" textLength="74.3" lengthAdjust="spacingAndGlyphs">Average</text>
<text x="232.3" y="1629" font-size="20.2" fill="#fff" textLength="88.6" lengthAdjust="spacingAndGlyphs">0.51852 A</text>
<rect x="467.8" y="1557.5" width="19.5" height="1348" fill="url(#chk)"/>
<rect x="468.3" y="1538.5" width="18.5" height="18.5" fill="#555" stroke="#e8e8e8" stroke-width="1"/>
<path d="M472.6 1550.8h10l-5 -5.5z" fill="#c8c8c8"/>
<rect x="468.3" y="1906" width="18.5" height="18" fill="#555" stroke="#e8e8e8" stroke-width="1"/>
<path d="M472.6 1912.2h10l-5 5.5z" fill="#c8c8c8"/>
<rect x="489" y="1457" width="9.5" height="469" fill="#3a3a3a"/>
<rect x="490.8" y="1457" width="5.8" height="469" fill="#8a8a8a"/>
<rect x="498" y="1457" width="1024.5" height="469" fill="#555"/>
<rect x="498.5" y="1457.5" width="1023.5" height="29" fill="#555" stroke="#f0f0f0" stroke-width="1.2"/>
<text x="505" y="1480" font-size="20.2" fill="#fff" textLength="88.1" lengthAdjust="spacingAndGlyphs">X Cursors</text>
<rect x="1436.5" y="1461.5" width="15" height="12" rx="1.5" fill="#9fb2cc" stroke="#6f8fc0" stroke-width="1"/>
<rect x="1436.5" y="1461.5" width="15" height="3" fill="#6c94d0"/>
<rect x="1442.5" y="1468.5" width="16" height="13" rx="1.5" fill="#f2f5fa" stroke="#5f8fd8" stroke-width="1.6"/>
<rect x="1442.5" y="1468" width="16" height="4" fill="#5f8fd8"/>
<rect x="1468" y="1462" width="19" height="17" fill="#fff" stroke="#2a5fc8" stroke-width="2"/>
<rect x="1468" y="1462" width="19" height="3.5" fill="#2a5fc8"/>
<path d="M1471 1467.5h4.5l-4.5 4.5z" fill="#e8501c"/>
<path d="M1484 1467.5h-4.5l4.5 4.5z" fill="#e8501c"/>
<path d="M1471 1476.5h4.5l-4.5 -4.5z" fill="#e8501c"/>
<path d="M1484 1476.5h-4.5l4.5 -4.5z" fill="#e8501c"/>
<path d="M1499 1463.3l15 15M1514 1463.3l-15 15" stroke="#a81010" stroke-width="6.2" stroke-linecap="round"/>
<path d="M1499 1463.3l15 15M1514 1463.3l-15 15" stroke="#ee3a30" stroke-width="4.4" stroke-linecap="round"/>
<path d="M517.4 1497h7.8v9.1h9.1v7.8h-9.1v9.1h-7.8v-9.1h-9.1v-7.8h9.1z" fill="url(#pg)" stroke="#3c9a1c" stroke-width="0.8" stroke-linejoin="round"/>
<text x="539.7" y="1519.6" font-size="20.2" fill="#fff" textLength="67.6" lengthAdjust="spacingAndGlyphs">Normal</text>
<text x="636.7" y="1519.6" font-size="20.2" fill="#fff" textLength="47.7" lengthAdjust="spacingAndGlyphs">Delta</text>
<rect x="700" y="1506" width="26" height="9.2" rx="4.6" fill="url(#mg)" stroke="#8c0a14" stroke-width="0.6"/>
<text x="730.5" y="1519.6" font-size="20.2" fill="#fff" textLength="47.2" lengthAdjust="spacingAndGlyphs">Clear</text>
<rect x="800" y="1499" width="1" height="24" fill="#484848"/>
<rect x="801" y="1499" width="1" height="24" fill="#626262"/>
<rect x="810" y="1498.5" width="28" height="24.3" fill="#f4f4f4" stroke="#c8c8c8" stroke-width="1"/>
<rect x="810" y="1498.5" width="28" height="4" fill="#d8d8d8"/>
<rect x="812.5" y="1505.5" width="5" height="4.4" fill="#2f6fd8"/>
<rect x="820" y="1507" width="15" height="1.6" fill="#9a9a9a"/>
<rect x="812.5" y="1511.1" width="5" height="4.4" fill="#2f6fd8"/>
<rect x="820" y="1512.6" width="15" height="1.6" fill="#9a9a9a"/>
<rect x="812.5" y="1516.7" width="5" height="4.4" fill="#2f6fd8"/>
<rect x="820" y="1518.2" width="15" height="1.6" fill="#9a9a9a"/>
<text x="841.4" y="1519.6" font-size="20.2" fill="#fff" textLength="49.5" lengthAdjust="spacingAndGlyphs">Show</text>
<path d="M900 1519.2h11.5l-5.8 6z" fill="#b4b4b4"/>
<rect x="498" y="1537" width="1002.5" height="33.4" fill="url(#hdr)"/>
<rect x="498" y="1537" width="1002.5" height="1" fill="#474747"/>
<rect x="498" y="1570.2" width="1002.5" height="1.4" fill="#353535"/>
<rect x="498" y="1609.2" width="1002.5" height="1.2" fill="#484848"/>
<rect x="498" y="1647.9" width="1002.5" height="1.2" fill="#484848"/>
<rect x="516.5" y="1570.4" width="1.2" height="77.5" fill="#474747"/>
<rect x="515.9" y="1538" width="1" height="32.4" fill="#6a6a6a"/>
<rect x="516.9" y="1538" width="1" height="32.4" fill="#3e3e3e"/>
<rect x="635.5" y="1570.4" width="1.2" height="77.5" fill="#474747"/>
<rect x="634.9" y="1538" width="1" height="32.4" fill="#6a6a6a"/>
<rect x="635.9" y="1538" width="1" height="32.4" fill="#3e3e3e"/>
<rect x="719.5" y="1570.4" width="1.2" height="77.5" fill="#474747"/>
<rect x="718.9" y="1538" width="1" height="32.4" fill="#6a6a6a"/>
<rect x="719.9" y="1538" width="1" height="32.4" fill="#3e3e3e"/>
<rect x="839.3" y="1570.4" width="1.2" height="77.5" fill="#474747"/>
<rect x="838.7" y="1538" width="1" height="32.4" fill="#6a6a6a"/>
<rect x="839.7" y="1538" width="1" height="32.4" fill="#3e3e3e"/>
<rect x="959.6" y="1570.4" width="1.2" height="77.5" fill="#474747"/>
<rect x="959" y="1538" width="1" height="32.4" fill="#6a6a6a"/>
<rect x="960" y="1538" width="1" height="32.4" fill="#3e3e3e"/>
<rect x="1079.8" y="1570.4" width="1.2" height="77.5" fill="#474747"/>
<rect x="1079.2" y="1538" width="1" height="32.4" fill="#6a6a6a"/>
<rect x="1080.2" y="1538" width="1" height="32.4" fill="#3e3e3e"/>
<rect x="1198.8" y="1570.4" width="1.2" height="77.5" fill="#474747"/>
<rect x="1198.2" y="1538" width="1" height="32.4" fill="#6a6a6a"/>
<rect x="1199.2" y="1538" width="1" height="32.4" fill="#3e3e3e"/>
<rect x="1317.9" y="1570.4" width="1.2" height="77.5" fill="#474747"/>
<rect x="1317.3" y="1538" width="1" height="32.4" fill="#6a6a6a"/>
<rect x="1318.3" y="1538" width="1" height="32.4" fill="#3e3e3e"/>
<rect x="1436.9" y="1570.4" width="1.2" height="77.5" fill="#474747"/>
<rect x="1436.3" y="1538" width="1" height="32.4" fill="#6a6a6a"/>
<rect x="1437.3" y="1538" width="1" height="32.4" fill="#3e3e3e"/>
<rect x="498" y="1570.4" width="18.5" height="77.5" fill="#4e4e4e"/>
<text x="540" y="1562.3" font-size="20.2" fill="#fff" textLength="73.2" lengthAdjust="spacingAndGlyphs">Position</text>
<text x="664.1" y="1562.3" font-size="20.2" fill="#fff" textLength="29.2" lengthAdjust="spacingAndGlyphs">Ref</text>
<text x="766.6" y="1562.3" font-size="20.2" fill="#fff" textLength="28.8" lengthAdjust="spacingAndGlyphs">Δ X</text>
<text x="880" y="1562.3" font-size="20.2" fill="#fff" textLength="41.2" lengthAdjust="spacingAndGlyphs">1/ΔX</text>
<text x="1008.5" y="1562.3" font-size="20.2" fill="#fff" textLength="24" lengthAdjust="spacingAndGlyphs">C1</text>
<text x="1114.4" y="1562.3" font-size="20.2" fill="#fff" textLength="52.7" lengthAdjust="spacingAndGlyphs">C1 ΔY</text>
<text x="1247" y="1562.3" font-size="20.2" fill="#fff" textLength="24" lengthAdjust="spacingAndGlyphs">C2</text>
<text x="1352.7" y="1562.3" font-size="20.2" fill="#fff" textLength="52.7" lengthAdjust="spacingAndGlyphs">C2 ΔY</text>
<text x="503" y="1599.2" font-size="20.2" fill="#fff">1</text>
<rect x="517.5" y="1571.7" width="117" height="34.6" fill="#272727" stroke="#1c1c1c" stroke-width="1" rx="3"/>
<rect x="605.5" y="1572.7" width="28" height="32.6" fill="url(#cba)" rx="2"/>
<path d="M614 1586.5h11l-5.5 6z" fill="#b4b4b4"/>
<clipPath id="cp0"><rect x="518" y="1571.7" width="88" height="34"/></clipPath>
<text x="521.4" y="1597.2" font-size="20.2" fill="#fff" textLength="88.9" lengthAdjust="spacingAndGlyphs" clip-path="url(#cp0)">-2.723146</text>
<rect x="637.6" y="1571.7" width="81.4" height="34.6" fill="url(#cbl)" stroke="#1f1f1f" stroke-width="1" rx="3"/>
<path d="M697.5 1586.2h11.5l-5.8 6z" fill="#b4b4b4"/>
<text x="642.9" y="1597.2" font-size="20.2" fill="#fff" textLength="47.5" lengthAdjust="spacingAndGlyphs">none</text>
<rect x="721" y="1571.7" width="118" height="34.6" fill="#3a3a3a" stroke="#3e3e3e" stroke-width="1" rx="3"/>
<rect x="810" y="1572.7" width="28" height="32.6" fill="url(#cbd)" rx="2"/>
<path d="M818.5 1586.5h11l-5.5 6z" fill="#787878"/>
<text x="964" y="1598.2" font-size="20.2" fill="#fff" textLength="106.5" lengthAdjust="spacingAndGlyphs">6.80568 mA</text>
<text x="1204" y="1598.2" font-size="20.2" fill="#fff" textLength="88.3" lengthAdjust="spacingAndGlyphs">15.0065 V</text>
<rect x="1455" y="1585.5" width="27.5" height="8.6" rx="4.3" fill="url(#mg)" stroke="#8c0a14" stroke-width="0.6"/>
<text x="503" y="1637.9" font-size="20.2" fill="#fff">2</text>
<rect x="517.5" y="1610.4" width="117" height="34.6" fill="#272727" stroke="#1c1c1c" stroke-width="1" rx="3"/>
<rect x="605.5" y="1611.4" width="28" height="32.6" fill="url(#cba)" rx="2"/>
<path d="M614 1625.2h11l-5.5 6z" fill="#b4b4b4"/>
<clipPath id="cp1"><rect x="518" y="1610.4" width="88" height="34"/></clipPath>
<text x="521.4" y="1635.9" font-size="20.2" fill="#fff" textLength="93.2" lengthAdjust="spacingAndGlyphs" clip-path="url(#cp1)">412.40546</text>
<rect x="637.6" y="1610.4" width="81.4" height="34.6" fill="url(#cbl)" stroke="#1f1f1f" stroke-width="1" rx="3"/>
<path d="M697.5 1624.9h11.5l-5.8 6z" fill="#b4b4b4"/>
<text x="642.9" y="1635.9" font-size="20.2" fill="#fff" textLength="47.5" lengthAdjust="spacingAndGlyphs">none</text>
<rect x="721" y="1610.4" width="118" height="34.6" fill="#3a3a3a" stroke="#3e3e3e" stroke-width="1" rx="3"/>
<rect x="810" y="1611.4" width="28" height="32.6" fill="url(#cbd)" rx="2"/>
<path d="M818.5 1625.2h11l-5.5 6z" fill="#787878"/>
<clipPath id="cq1"><rect x="722" y="1610.4" width="88" height="34"/></clipPath>
<text x="725.6" y="1635.9" font-size="20.2" fill="#9b9b9b" textLength="93.2" lengthAdjust="spacingAndGlyphs" clip-path="url(#cq1)">220.27231</text>
<text x="964" y="1636.9" font-size="20.2" fill="#fff" textLength="106.5" lengthAdjust="spacingAndGlyphs">5.58678 mA</text>
<text x="1204" y="1636.9" font-size="20.2" fill="#fff" textLength="77.3" lengthAdjust="spacingAndGlyphs">15.013 V</text>
<rect x="1455" y="1624.2" width="27.5" height="8.6" rx="4.3" fill="url(#mg)" stroke="#8c0a14" stroke-width="0.6"/>
<rect x="1501.2" y="1557.5" width="20.5" height="1348" fill="url(#chk)"/>
<rect x="1501.7" y="1538.5" width="19.5" height="18.5" fill="#555" stroke="#e8e8e8" stroke-width="1"/>
<path d="M1506.5 1550.8h10l-5 -5.5z" fill="#c8c8c8"/>
<rect x="1501.7" y="1906" width="19.5" height="18" fill="#555" stroke="#e8e8e8" stroke-width="1"/>
<path d="M1506.5 1912.2h10l-5 5.5z" fill="#c8c8c8"/>
<rect x="1522.7" y="1457" width="9.5" height="469" fill="#3a3a3a"/>
<rect x="1524.5" y="1457" width="5.8" height="469" fill="#8a8a8a"/>
<rect x="1532" y="1457" width="1964" height="469" fill="#000"/>
<rect x="1532.5" y="1457.5" width="1963" height="29" fill="#555" stroke="#f0f0f0" stroke-width="1.2"/>
<text x="1539" y="1480" font-size="20.2" fill="#fff" textLength="70.7" lengthAdjust="spacingAndGlyphs">Zoom 1</text>
<rect x="3408.7" y="1461.5" width="15" height="12" rx="1.5" fill="#9fb2cc" stroke="#6f8fc0" stroke-width="1"/>
<rect x="3408.7" y="1461.5" width="15" height="3" fill="#6c94d0"/>
<rect x="3414.7" y="1468.5" width="16" height="13" rx="1.5" fill="#f2f5fa" stroke="#5f8fd8" stroke-width="1.6"/>
<rect x="3414.7" y="1468" width="16" height="4" fill="#5f8fd8"/>
<rect x="3440.2" y="1462" width="19" height="17" fill="#fff" stroke="#2a5fc8" stroke-width="2"/>
<rect x="3440.2" y="1462" width="19" height="3.5" fill="#2a5fc8"/>
<path d="M3443.2 1467.5h4.5l-4.5 4.5z" fill="#e8501c"/>
<path d="M3456.2 1467.5h-4.5l4.5 4.5z" fill="#e8501c"/>
<path d="M3443.2 1476.5h4.5l-4.5 -4.5z" fill="#e8501c"/>
<path d="M3456.2 1476.5h-4.5l4.5 -4.5z" fill="#e8501c"/>
<path d="M3471.2 1463.3l15 15M3486.2 1463.3l-15 15" stroke="#a81010" stroke-width="6.2" stroke-linecap="round"/>
<path d="M3471.2 1463.3l15 15M3486.2 1463.3l-15 15" stroke="#ee3a30" stroke-width="4.4" stroke-linecap="round"/>
<text x="1555" y="1514" font-size="20.2" fill="#ffd500" textLength="30" lengthAdjust="spacingAndGlyphs">mA</text>
<text x="1535.5" y="1575.8" font-size="20.2" fill="#ffd500" textLength="33.2" lengthAdjust="spacingAndGlyphs">800</text>
<text x="1535.5" y="1613.8" font-size="20.2" fill="#ffd500" textLength="33.2" lengthAdjust="spacingAndGlyphs">700</text>
<text x="1535.5" y="1651.8" font-size="20.2" fill="#ffd500" textLength="33.2" lengthAdjust="spacingAndGlyphs">600</text>
<text x="1535.5" y="1689.8" font-size="20.2" fill="#ffd500" textLength="33.2" lengthAdjust="spacingAndGlyphs">500</text>
<text x="1535.5" y="1727.8" font-size="20.2" fill="#ffd500" textLength="33.2" lengthAdjust="spacingAndGlyphs">400</text>
<text x="1535.5" y="1765.8" font-size="20.2" fill="#ffd500" textLength="33.2" lengthAdjust="spacingAndGlyphs">300</text>
<text x="1535.5" y="1803.8" font-size="20.2" fill="#ffd500" textLength="33.2" lengthAdjust="spacingAndGlyphs">200</text>
<text x="1535.5" y="1841.8" font-size="20.2" fill="#ffd500" textLength="33.2" lengthAdjust="spacingAndGlyphs">100</text>
<text x="1535.5" y="1879.8" font-size="20.2" fill="#ffd500">0</text>
<text x="1644.4" y="1914.7" font-size="20.2" fill="#fff" textLength="44" lengthAdjust="spacingAndGlyphs">0 ms</text>
<text x="1770.5" y="1914.7" font-size="20.2" fill="#fff" textLength="55.1" lengthAdjust="spacingAndGlyphs">10 ms</text>
<text x="1896.9" y="1914.7" font-size="20.2" fill="#fff" textLength="55.1" lengthAdjust="spacingAndGlyphs">20 ms</text>
<text x="2023.1" y="1914.7" font-size="20.2" fill="#fff" textLength="55.1" lengthAdjust="spacingAndGlyphs">30 ms</text>
<text x="2148.8" y="1914.7" font-size="20.2" fill="#fff" textLength="55.1" lengthAdjust="spacingAndGlyphs">40 ms</text>
<text x="2276.2" y="1914.7" font-size="20.2" fill="#fff" textLength="55.1" lengthAdjust="spacingAndGlyphs">50 ms</text>
<text x="2401.9" y="1914.7" font-size="20.2" fill="#fff" textLength="55.1" lengthAdjust="spacingAndGlyphs">60 ms</text>
<text x="2528.2" y="1914.7" font-size="20.2" fill="#fff" textLength="55.1" lengthAdjust="spacingAndGlyphs">70 ms</text>
<text x="2654.9" y="1914.7" font-size="20.2" fill="#fff" textLength="55.1" lengthAdjust="spacingAndGlyphs">80 ms</text>
<text x="2781.7" y="1914.7" font-size="20.2" fill="#fff" textLength="55.1" lengthAdjust="spacingAndGlyphs">90 ms</text>
<text x="2908.2" y="1914.7" font-size="20.2" fill="#fff" textLength="66.2" lengthAdjust="spacingAndGlyphs">100 ms</text>
<text x="3034.1" y="1914.7" font-size="20.2" fill="#fff" textLength="66.2" lengthAdjust="spacingAndGlyphs">110 ms</text>
<text x="3160.8" y="1914.7" font-size="20.2" fill="#fff" textLength="66.2" lengthAdjust="spacingAndGlyphs">120 ms</text>
<text x="3287.5" y="1914.7" font-size="20.2" fill="#fff" textLength="66.2" lengthAdjust="spacingAndGlyphs">130 ms</text>
<text x="3413.6" y="1914.7" font-size="20.2" fill="#fff" textLength="66.2" lengthAdjust="spacingAndGlyphs">140 ms</text>
<path d="M1608 1875H1639V1885.6H1608zM1639 1787H1690.8V1885H1639zM1743 1768H1765.3V1877H1743zM1765.3 1745H1791.7V1873H1765.3zM1818.9 1606H1844.5V1864H1818.9zM1869.4 1532.7H1919.8V1816.8H1869.4zM1919.8 1532.7H1947V1814H1919.8zM1947 1574.2H1972.3V1837H1947zM1972.3 1613.8H1996.7V1842.9H1972.3zM1996.7 1636.3H2022.7V1842.9H1996.7zM2022.7 1643L2075 1643L2075 1648.8L2123.6 1648.8L2123.6 1646L2176 1646L2176 1643L2226.5 1643L2226.5 1648.8L2249.8 1648.8L2249.8 1646L2277 1646L2277 1643L2327.5 1643L2327.5 1631.7L2352.7 1631.7L2352.7 1629L2405 1629L2405 1626.6L2457.5 1626.6L2457.5 1629L2506 1629L2506 1621.6L2557.4 1621.6L2557.4 1621L2634.6 1621L2634.6 1619.9L2658.4 1619.9L2658.4 1619L2713.8 1619L2713.8 1619.5L2737.6 1619.5L2737.6 1618L2787 1618L2787 1616L2812.8 1616L2812.8 1615.5L2864.3 1615.5L2864.3 1614.7L2915.8 1614.7L2915.8 1616L2941.5 1616L2941.5 1623.4L2967.2 1623.4L2967.2 1618L3070.2 1618L3070.2 1628L3094 1628L3094 1623L3119.7 1623L3119.7 1620L3222.6 1620L3222.6 1627L3272 1627L3272 1623L3323.6 1623L3323.6 1628L3377 1628L3377 1633.3L3402.8 1633.3L3402.8 1878.8L3349.3 1878.8L3349.3 1836L3297.8 1836L3297.8 1840L3246.4 1840L3246.4 1833L3094 1833L3094 1836L3044.4 1836L3044.4 1832L2991 1832L2991 1834L2915.8 1834L2915.8 1835.3L2864.3 1835.3L2864.3 1834L2761.3 1834L2761.3 1836L2713.8 1836L2713.8 1834.9L2634.6 1834.9L2634.6 1837L2557.4 1837L2557.4 1834.3L2482.7 1834.3L2482.7 1837.4L2405 1837.4L2405 1840L2352.7 1840L2352.7 1838L2327.5 1838L2327.5 1842.9L2250 1842.9L2250 1844.8L2176 1844.8L2176 1842.9L2022.7 1842.9zM3402.8 1789.3H3452.3V1884.4H3402.8z" fill="#443a04"/>
<path d="M1607.8 1882L1625.7 1881.5L1644.8 1881.8L1662.7 1880.7L1664 1799.5L1665.3 1799.5L1667.2 1834.4L1671.7 1845.9L1679.3 1848.3L1697.2 1850L1698.5 1867.2L1700 1867.2L1702.3 1845.5L1705.5 1842.6L1711.3 1842.6L1719 1842.6L1727.9 1838.9L1735.8 1836.4L1736.8 1861L1738.4 1861L1740.7 1826.4L1743.9 1822.1L1749.6 1818.5L1757.3 1815.5L1766.2 1814.8L1774.2 1814.3L1775.2 1850L1776.7 1850L1779 1788.3L1782.2 1781.1L1788 1771.6L1795.6 1763.9L1804.6 1757L1812.5 1752.4L1813.5 1828.7L1815.1 1828.7L1817.4 1719.6L1820.6 1707.3L1826.3 1689.3L1834 1674.5L1842.9 1659.2L1850.8 1649.1L1851.9 1791.8L1853.4 1791.8L1855.7 1616.7L1858.9 1596.6L1864.6 1581.3L1872.3 1568.7L1881.3 1560.1L1889.2 1554.4L1890.2 1747.1L1891.7 1747.1L1894 1567.1L1897.2 1543.3L1901.7 1538.8L1906.8 1536.7L1911.9 1536.7L1917 1540L1922.2 1546.6L1926 1553.1L1927.5 1555.6L1928.5 1737.2L1930.1 1737.2L1932.4 1596.9L1935.6 1575.3L1941.3 1589.3L1949 1600.7L1957.9 1617.4L1965.9 1628.6L1966.9 1763.9L1968.4 1763.9L1970.7 1652.5L1973.9 1635.1L1979.7 1640.6L1987.3 1645L1996.3 1649.2L2004.2 1651.9L2005.2 1786.8L2006.8 1786.8L2009.1 1669.3L2012.3 1653.2L2018 1655.4L2025.7 1657.3L2034.6 1659L2042.5 1660.1L2039.7 1661.8L2041.5 1670.8L2042.9 1700.7L2043.6 1779.8L2044.6 1779.8L2045.2 1700.7L2046.6 1679L2048.7 1667.1L2051.5 1662.6L2055.7 1661.8L2080 1661.8L2078 1661.8L2079.8 1670.8L2081.2 1700.2L2081.8 1778.1L2082.9 1778.1L2083.5 1700.2L2084.9 1679L2087 1667.1L2089.8 1662.6L2094 1661.8L2118.3 1661.8L2116.3 1661.8L2118.1 1670.8L2119.5 1699.9L2120.1 1777.4L2121.1 1777.4L2121.8 1699.9L2123.2 1679L2125.2 1667.1L2128 1662.6L2132.3 1661.8L2156.5 1661.8L2154.6 1661.8L2156.3 1670.8L2157.7 1699.3L2158.4 1775.3L2159.4 1775.3L2160 1699.3L2161.5 1679L2163.5 1667.1L2166.3 1662.6L2170.5 1661.8L2194.8 1661.8L2192.8 1661.8L2194.6 1670.8L2196 1702.7L2196.7 1778.2L2197.7 1778.2L2198.3 1702.7L2199.7 1682.7L2201.8 1670.8L2204.6 1666.3L2208.8 1665.5L2233.1 1665.1L2231.1 1665.1L2232.9 1674.1L2234.3 1698.9L2234.9 1775.6L2236 1775.6L2236.6 1698.9L2238 1678.3L2240 1666.4L2242.9 1661.9L2247.1 1661.1L2271.4 1660.4L2269.4 1660.4L2271.2 1669.4L2272.6 1702L2273.2 1788.1L2274.2 1788.1L2274.9 1702L2276.3 1676.8L2278.3 1664.9L2281.1 1660.4L2285.3 1659.6L2309.6 1657.1L2307.6 1652.7L2309.4 1661.7L2310.8 1692.1L2311.5 1782L2312.5 1782L2313.1 1692.1L2314.5 1665L2316.6 1653.1L2319.4 1648.6L2323.6 1647.8L2347.9 1646.6L2345.9 1646.6L2347.7 1655.6L2349.1 1688L2349.8 1775.3L2350.8 1775.3L2351.4 1688L2352.8 1662.3L2354.9 1650.4L2357.7 1645.9L2361.9 1645L2386.2 1643.7L2384.2 1643.7L2386 1652.8L2387.4 1688.1L2388 1779.4L2389.1 1779.4L2389.7 1688.1L2391.1 1660.4L2393.1 1648.5L2396 1644L2400.2 1643.2L2424.5 1642.7L2422.5 1642.7L2424.3 1651.7L2425.7 1686.3L2426.3 1775.9L2427.3 1775.9L2428 1686.3L2429.4 1659.4L2431.4 1647.5L2434.2 1643L2438.4 1642.2L2462.7 1641.7L2460.7 1641.6L2462.5 1650.7L2463.9 1688.1L2464.6 1786.9L2465.6 1786.9L2466.2 1688.1L2467.6 1656.7L2469.7 1644.8L2472.5 1640.3L2476.7 1639.5L2501 1637.6L2499 1637.6L2500.8 1646.6L2502.2 1684.8L2502.8 1781.9L2503.9 1781.9L2504.5 1684.8L2505.9 1654.1L2508 1642.3L2510.8 1637.7L2515 1636.9L2539.3 1636.4L2537.3 1636.4L2539.1 1645.4L2540.5 1685.3L2541.1 1785L2542.1 1785L2542.8 1685.3L2544.2 1653.4L2546.2 1641.5L2549 1637L2553.3 1636.2L2577.5 1636.1L2575.6 1636L2577.4 1645.1L2578.8 1683.7L2579.4 1780.9L2580.4 1780.9L2581.1 1683.7L2582.5 1653.1L2584.5 1641.2L2587.3 1636.7L2591.5 1635.9L2615.8 1635.7L2613.8 1635.7L2615.6 1644.7L2617 1683.4L2617.7 1780.5L2618.7 1780.5L2619.3 1683.4L2620.7 1652.8L2622.8 1640.9L2625.6 1636.4L2629.8 1635.6L2654.1 1635.4L2652.1 1635.4L2653.9 1644.4L2655.3 1685.7L2655.9 1788.3L2657 1788.3L2657.6 1685.7L2659 1652.5L2661.1 1640.6L2663.9 1636.1L2668.1 1635.2L2692.4 1635.1L2690.4 1635L2692.2 1644.1L2693.6 1684.5L2694.2 1785.5L2695.2 1785.5L2695.9 1684.5L2697.3 1652L2699.3 1640.1L2702.1 1635.6L2706.4 1634.8L2730.6 1634.5L2728.7 1634.5L2730.4 1643.5L2731.9 1683.8L2732.5 1784.6L2733.5 1784.6L2734.2 1683.8L2735.6 1651.4L2737.6 1639.5L2740.4 1635L2744.6 1634.2L2768.9 1634L2766.9 1634L2768.7 1643L2770.1 1680.5L2770.8 1775.7L2771.8 1775.7L2772.4 1680.5L2773.8 1650.9L2775.9 1639L2778.7 1634.5L2782.9 1633.7L2807.2 1633.2L2805.2 1633.2L2807 1642.2L2808.4 1680.3L2809 1777.8L2810.1 1777.8L2810.7 1680.3L2812.1 1649.5L2814.1 1637.6L2817 1633.1L2821.2 1632.3L2845.5 1631.5L2843.5 1631.5L2845.3 1640.5L2846.7 1682.6L2847.3 1786.3L2848.3 1786.3L2849 1682.6L2850.4 1648.8L2852.4 1636.9L2855.2 1632.4L2859.5 1631.6L2883.7 1631.7L2881.7 1631.7L2883.5 1640.7L2884.9 1679.8L2885.6 1777.4L2886.6 1777.4L2887.2 1679.8L2888.7 1649L2890.7 1637.1L2893.5 1632.6L2897.7 1631.8L2922 1631.9L2920 1631.9L2921.8 1640.9L2923.2 1687.6L2923.9 1786.5L2924.9 1786.5L2925.5 1687.6L2926.9 1656L2929 1644.2L2931.8 1639.6L2936 1638.8L2960.3 1638.8L2958.3 1638.8L2960.1 1647.8L2961.5 1681L2962.1 1779.9L2963.2 1779.9L2963.8 1681L2965.2 1649.6L2967.2 1637.7L2970.1 1633.2L2974.3 1632.4L2998.6 1632.5L2996.6 1632.5L2998.4 1641.5L2999.8 1683.4L3000.4 1786.7L3001.4 1786.7L3002.1 1683.4L3003.5 1649.8L3005.5 1637.9L3008.3 1633.4L3012.5 1632.6L3036.8 1632.7L3034.8 1632.7L3036.6 1641.7L3038 1688.9L3038.7 1788.5L3039.7 1788.5L3040.3 1688.9L3041.7 1657.1L3043.8 1645.2L3046.6 1640.7L3050.8 1639.9L3075.1 1640L3073.1 1640L3074.9 1649.1L3076.3 1685.2L3077 1776.3L3078 1776.3L3078.6 1685.2L3080 1657.5L3082.1 1645.6L3084.9 1641.1L3089.1 1640.3L3113.4 1640.5L3111.4 1640.5L3113.2 1649.5L3114.6 1684.6L3115.2 1785.6L3116.2 1785.6L3116.9 1684.6L3118.3 1652.1L3120.3 1640.2L3123.1 1635.7L3127.4 1634.8L3151.6 1634.9L3149.7 1634.9L3151.5 1643.9L3152.9 1684.7L3153.5 1785.5L3154.5 1785.5L3155.2 1684.7L3156.6 1652.3L3158.6 1640.4L3161.4 1635.9L3165.6 1635L3189.9 1635.1L3187.9 1635.1L3189.7 1644.2L3191.1 1686.3L3191.8 1774.8L3192.8 1774.8L3193.4 1686.3L3194.8 1659.9L3196.9 1648.1L3199.7 1643.5L3203.9 1642.7L3228.2 1642.9L3226.2 1642.9L3228 1651.9L3229.4 1687.1L3230 1776.3L3231.1 1776.3L3231.7 1687.1L3233.1 1660.4L3235.2 1648.5L3238 1644L3242.2 1643.1L3266.5 1643.3L3264.5 1643.3L3266.3 1652.4L3267.7 1686.1L3268.3 1784.4L3269.3 1784.4L3270 1686.1L3271.4 1654.8L3273.4 1642.9L3276.2 1638.4L3280.5 1637.6L3304.7 1637.6L3302.8 1637.6L3304.5 1646.6L3306 1687.8L3306.6 1775.1L3307.6 1775.1L3308.3 1687.8L3309.7 1662.1L3311.7 1650.2L3314.5 1645.7L3318.7 1644.9L3343 1645.1L3341 1645.2L3342.8 1654.2L3344.2 1690.2L3344.9 1781L3345.9 1781L3346.5 1690.2L3347.9 1662.7L3350 1650.8L3352.8 1646.3L3357 1645.5L3381.3 1645.8L3381.6 1646.6L3383.5 1711.4L3388 1712.2L3390.6 1867.2L3394.4 1879.9L3408.5 1881.1L3422.5 1879.9L3424.4 1809L3430.2 1808.2L3432.8 1834.4L3437.9 1845.9L3446.8 1850L3458.3 1852.4" fill="none" stroke="#c8a400" stroke-width="2.8" stroke-linejoin="round"/>
<path d="M1843.5 1557V1762M1792 1674V1762" stroke="#c8a400" stroke-width="1.2"/>
<path d="M1608 1760.6H3457" stroke="#1480b8" stroke-width="3.4" opacity="0.5"/>
<path d="M1608 1760.6H3457" stroke="#25b4f0" stroke-width="1.6" opacity="0.9"/>
<path d="M1608 1883.6H3458M1608 1842.6H3458M1608 1801.6H3458M1608 1678.6H3458M1608 1637.6H3458M1608 1596.6H3458M1608 1555.6H3458" stroke="#b0b0b0" stroke-width="1.4" stroke-dasharray="3.2 2.2" opacity="0.9"/>
<path d="M1608 1719.6H3458" stroke="#a0a0a0" stroke-width="1.6" stroke-dasharray="6 2.5"/>
<path d="M1791.8 1526V1887M1919.6 1526V1887M2047.4 1526V1887M2175.2 1526V1887M2303 1526V1887M2430.8 1526V1887M2558.6 1526V1887M2686.4 1526V1887M2814.2 1526V1887M2942 1526V1887M3069.8 1526V1887M3197.6 1526V1887M3325.4 1526V1887M3453.2 1526V1887" stroke="#8c8c8c" stroke-width="1.2" stroke-dasharray="1.2 2.2" opacity="0.8"/>
<path d="M1664 1526V1887" stroke="#b0b0b0" stroke-width="1.4" stroke-dasharray="3.2 2.2" opacity="0.9"/>
<path d="M1629 1525V1887" stroke="#c8142a" stroke-width="2.6"/>
<rect x="3122.7" y="1495.3" width="22.5" height="21" fill="none" stroke="#e00000" stroke-width="2.4"/>
<rect x="3170.5" y="1497.5" width="6.6" height="6.6" fill="#5cc84c"/>
<rect x="3181" y="1497.5" width="6.6" height="6.6" fill="#5cc84c"/>
<rect x="3170.5" y="1508" width="6.6" height="6.6" fill="#5cc84c"/>
<rect x="3181" y="1508" width="6.6" height="6.6" fill="#5cc84c"/>
<path d="M3206 1505a9.5 9.5 0 0 1 16-5.5M3225 1506a9.5 9.5 0 0 1-16 5.5" fill="none" stroke="#4cb83c" stroke-width="4"/>
<path d="M3219 1494l7.5 2-4 6zM3212 1517l-7.5-2 4-6z" fill="#4cb83c"/>
<path d="M3253 1494.5l3.3 10 2-3.8 6.6 6.6 1.6-1.6-6.6-6.6 3.8-2z" fill="#1a8cff"/>
<rect x="3250.5" y="1509.5" width="23" height="5.5" fill="#8c8c8c"/>
<path d="M3296.5 1496v14M3316.5 1496v14M3296.5 1503h20" fill="none" stroke="#1a8cff" stroke-width="2"/>
<rect x="3295" y="1511.5" width="23.5" height="5.5" fill="#8c8c8c"/>
<path d="M3339.5 1499.5h17M3339.5 1515.5h17M3348 1499.5v16" fill="none" stroke="#1a8cff" stroke-width="2"/>
<rect x="3358" y="1495.5" width="6" height="21.5" fill="#8c8c8c"/>
<path d="M3388 1492.5v15M3388 1494.5h20M3388 1501.5h11" fill="none" stroke="#1a8cff" stroke-width="2"/>
<rect x="3385.5" y="1509" width="23.5" height="5.5" fill="#8c8c8c"/>
<rect x="3421" y="1488.5" width="36" height="35.5" fill="#5a5a5a" stroke="#707070" stroke-width="1" rx="3"/>
<g transform="translate(3437 1505) rotate(-45) scale(0.84 1) rotate(45)"><path d="M8.5 -0.3L12.1 0.7L11.4 4L7.7 3.5L6.2 5.8L8 9.1L5.2 10.9L2.9 7.9L0.3 8.5L-0.7 12.1L-4 11.4L-3.5 7.7L-5.8 6.2L-9.1 8L-10.9 5.2L-7.9 2.9L-8.5 0.3L-12.1 -0.7L-11.4 -4L-7.7 -3.5L-6.2 -5.8L-8 -9.1L-5.2 -10.9L-2.9 -7.9L-0.3 -8.5L0.7 -12.1L4 -11.4L3.5 -7.7L5.8 -6.2L9.1 -8L10.9 -5.2L7.9 -2.9z" transform="translate(1.3 1.1)" fill="#4f6676" stroke="#4f6676" stroke-width="1" stroke-linejoin="round"/><path d="M8.5 -0.3L12.1 0.7L11.4 4L7.7 3.5L6.2 5.8L8 9.1L5.2 10.9L2.9 7.9L0.3 8.5L-0.7 12.1L-4 11.4L-3.5 7.7L-5.8 6.2L-9.1 8L-10.9 5.2L-7.9 2.9L-8.5 0.3L-12.1 -0.7L-11.4 -4L-7.7 -3.5L-6.2 -5.8L-8 -9.1L-5.2 -10.9L-2.9 -7.9L-0.3 -8.5L0.7 -12.1L4 -11.4L3.5 -7.7L5.8 -6.2L9.1 -8L10.9 -5.2L7.9 -2.9zM-4 0a4 4 0 1 0 7.9 0a4 4 0 1 0 -7.9 0z" fill="url(#gg)" fill-rule="evenodd" stroke="#dfe3e6" stroke-width="0.8" stroke-linejoin="round"/><path d="M-4 0a4 4 0 1 0 7.9 0a4 4 0 1 0 -7.9 0z" fill="#3d5566"/><path d="M-4 0a4 4 0 1 0 7.9 0a4 4 0 1 0 -7.9 0z" transform="translate(1.5 1.2) scale(0.8)" fill="#5a5a5a"/></g>
<path d="M3442.4 1510.8h9.5l-4.8 5.5z" fill="#c8c8c8"/>
</svg>
</body></html>
